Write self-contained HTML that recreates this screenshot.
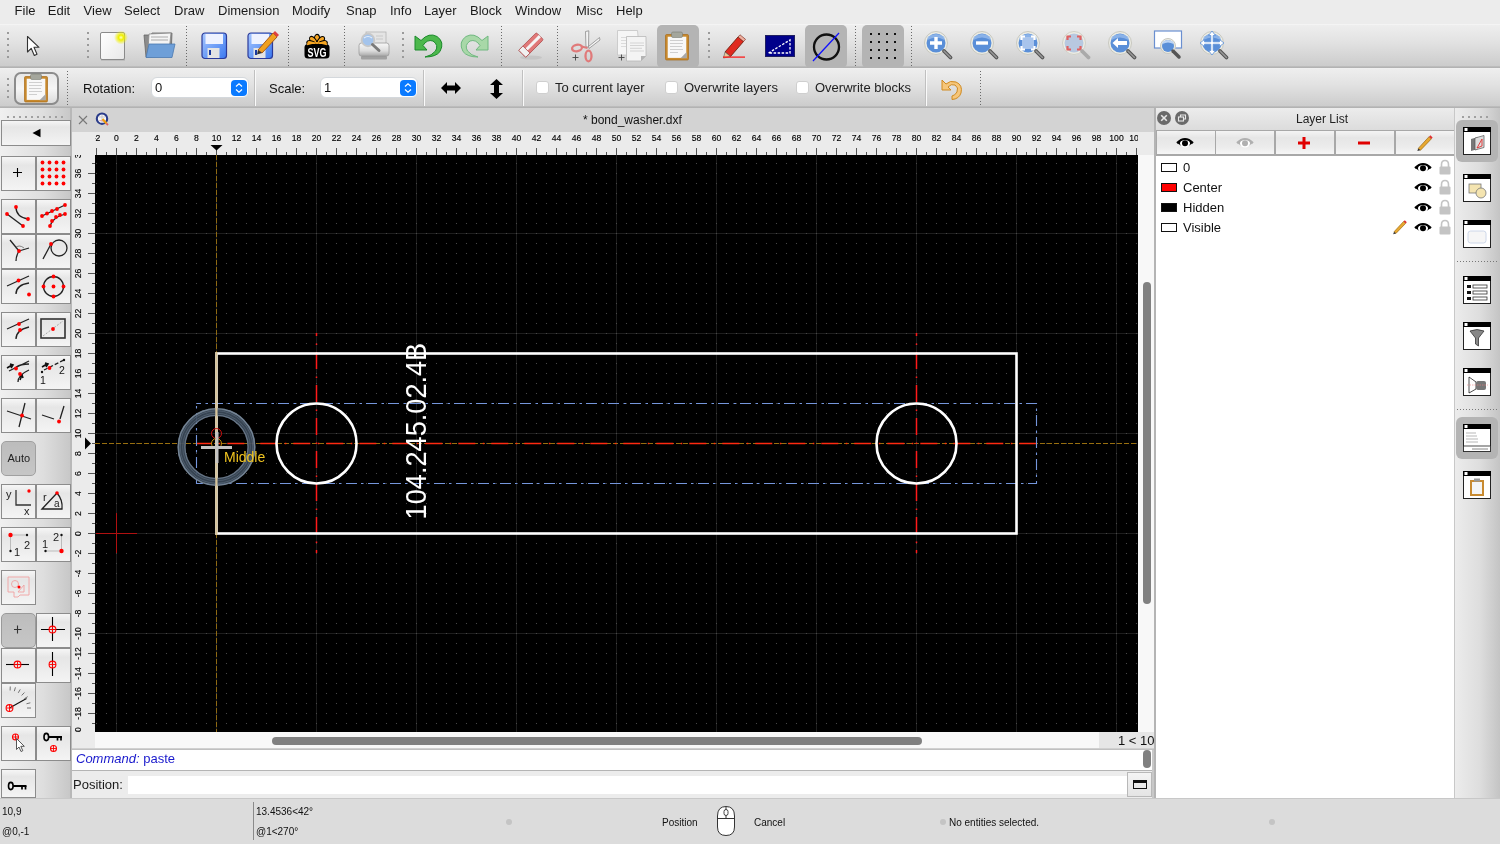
<!DOCTYPE html>
<html><head><meta charset="utf-8"><style>
html,body{margin:0;padding:0;width:1500px;height:844px;overflow:hidden;background:#ececec;font-family:"Liberation Sans", sans-serif;position:relative}
</style></head><body>
<div style="position:absolute;left:0;top:0;width:1500px;height:844px;will-change:transform"><div style="position:absolute;left:0px;top:0px;width:1500px;height:24px;background:#ececec"></div><div style="position:absolute;left:14.6px;top:4px;font-size:13px;line-height:1;color:#1a1a1a;white-space:nowrap;">File</div><div style="position:absolute;left:47.8px;top:4px;font-size:13px;line-height:1;color:#1a1a1a;white-space:nowrap;">Edit</div><div style="position:absolute;left:83.6px;top:4px;font-size:13px;line-height:1;color:#1a1a1a;white-space:nowrap;">View</div><div style="position:absolute;left:124px;top:4px;font-size:13px;line-height:1;color:#1a1a1a;white-space:nowrap;">Select</div><div style="position:absolute;left:174px;top:4px;font-size:13px;line-height:1;color:#1a1a1a;white-space:nowrap;">Draw</div><div style="position:absolute;left:218px;top:4px;font-size:13px;line-height:1;color:#1a1a1a;white-space:nowrap;">Dimension</div><div style="position:absolute;left:292px;top:4px;font-size:13px;line-height:1;color:#1a1a1a;white-space:nowrap;">Modify</div><div style="position:absolute;left:346px;top:4px;font-size:13px;line-height:1;color:#1a1a1a;white-space:nowrap;">Snap</div><div style="position:absolute;left:390px;top:4px;font-size:13px;line-height:1;color:#1a1a1a;white-space:nowrap;">Info</div><div style="position:absolute;left:424px;top:4px;font-size:13px;line-height:1;color:#1a1a1a;white-space:nowrap;">Layer</div><div style="position:absolute;left:470px;top:4px;font-size:13px;line-height:1;color:#1a1a1a;white-space:nowrap;">Block</div><div style="position:absolute;left:515px;top:4px;font-size:13px;line-height:1;color:#1a1a1a;white-space:nowrap;">Window</div><div style="position:absolute;left:576px;top:4px;font-size:13px;line-height:1;color:#1a1a1a;white-space:nowrap;">Misc</div><div style="position:absolute;left:616px;top:4px;font-size:13px;line-height:1;color:#1a1a1a;white-space:nowrap;">Help</div><div style="position:absolute;left:0px;top:24px;width:1500px;height:44px;background:linear-gradient(#eeeeee,#e2e2e2 40%,#cacaca);border-top:1px solid #f4f4f4;box-sizing:border-box"></div><div style="position:absolute;left:0px;top:68px;width:1500px;height:40px;background:linear-gradient(#eeeeee,#e2e2e2 40%,#cacaca);border-top:1px solid #f0f0f0;box-sizing:border-box"></div><div style="position:absolute;left:0px;top:66px;width:1500px;height:2px;background:linear-gradient(#c0c0c0,#aeaeae)"></div><div style="position:absolute;left:0px;top:106px;width:1500px;height:2px;background:linear-gradient(#c0c0c0,#aeaeae)"></div><div style="position:absolute;left:7px;top:32px;width:2px;height:2px;background:#9a9a9a"></div><div style="position:absolute;left:7px;top:38px;width:2px;height:2px;background:#9a9a9a"></div><div style="position:absolute;left:7px;top:44px;width:2px;height:2px;background:#9a9a9a"></div><div style="position:absolute;left:7px;top:50px;width:2px;height:2px;background:#9a9a9a"></div><div style="position:absolute;left:7px;top:56px;width:2px;height:2px;background:#9a9a9a"></div><div style="position:absolute;left:87px;top:32px;width:2px;height:2px;background:#9a9a9a"></div><div style="position:absolute;left:87px;top:38px;width:2px;height:2px;background:#9a9a9a"></div><div style="position:absolute;left:87px;top:44px;width:2px;height:2px;background:#9a9a9a"></div><div style="position:absolute;left:87px;top:50px;width:2px;height:2px;background:#9a9a9a"></div><div style="position:absolute;left:87px;top:56px;width:2px;height:2px;background:#9a9a9a"></div><div style="position:absolute;left:402px;top:32px;width:2px;height:2px;background:#9a9a9a"></div><div style="position:absolute;left:402px;top:38px;width:2px;height:2px;background:#9a9a9a"></div><div style="position:absolute;left:402px;top:44px;width:2px;height:2px;background:#9a9a9a"></div><div style="position:absolute;left:402px;top:50px;width:2px;height:2px;background:#9a9a9a"></div><div style="position:absolute;left:402px;top:56px;width:2px;height:2px;background:#9a9a9a"></div><div style="position:absolute;left:708px;top:32px;width:2px;height:2px;background:#9a9a9a"></div><div style="position:absolute;left:708px;top:38px;width:2px;height:2px;background:#9a9a9a"></div><div style="position:absolute;left:708px;top:44px;width:2px;height:2px;background:#9a9a9a"></div><div style="position:absolute;left:708px;top:50px;width:2px;height:2px;background:#9a9a9a"></div><div style="position:absolute;left:708px;top:56px;width:2px;height:2px;background:#9a9a9a"></div><div style="position:absolute;left:186px;top:26px;width:1px;height:41px;background:repeating-linear-gradient(#6a6a6a 0 1px,transparent 1px 3px)"></div><div style="position:absolute;left:288px;top:26px;width:1px;height:41px;background:repeating-linear-gradient(#6a6a6a 0 1px,transparent 1px 3px)"></div><div style="position:absolute;left:344px;top:26px;width:1px;height:41px;background:repeating-linear-gradient(#6a6a6a 0 1px,transparent 1px 3px)"></div><div style="position:absolute;left:501px;top:26px;width:1px;height:41px;background:repeating-linear-gradient(#6a6a6a 0 1px,transparent 1px 3px)"></div><div style="position:absolute;left:557px;top:26px;width:1px;height:41px;background:repeating-linear-gradient(#6a6a6a 0 1px,transparent 1px 3px)"></div><div style="position:absolute;left:855px;top:26px;width:1px;height:41px;background:repeating-linear-gradient(#6a6a6a 0 1px,transparent 1px 3px)"></div><div style="position:absolute;left:911px;top:26px;width:1px;height:41px;background:repeating-linear-gradient(#6a6a6a 0 1px,transparent 1px 3px)"></div><div style="position:absolute;left:657px;top:25px;width:42px;height:43px;background:#b4b4b4;border-radius:5px"></div><div style="position:absolute;left:805px;top:25px;width:42px;height:43px;background:#b4b4b4;border-radius:5px"></div><div style="position:absolute;left:862px;top:25px;width:42px;height:43px;background:#b4b4b4;border-radius:5px"></div><svg width="16" height="24" viewBox="0 0 16 24" style="position:absolute;left:26px;top:35px;overflow:visible"><path d="M1.5 1.5 L1.5 17 L5.2 13.3 L8.3 20.5 L11 19.3 L8 12.3 L13 12.3 Z" fill="#fff" stroke="#333" stroke-width="1.1" stroke-linejoin="round"/></svg><svg width="30" height="32" viewBox="0 0 30 32" style="position:absolute;left:99px;top:31px;overflow:visible"><defs><radialGradient id="glow"><stop offset="0" stop-color="#ffffc0"/><stop offset="0.35" stop-color="#f0f000"/><stop offset="1" stop-color="#f0f000" stop-opacity="0"/></radialGradient><linearGradient id="pg" x1="0" y1="0" x2="1" y2="1"><stop offset="0" stop-color="#ffffff"/><stop offset="1" stop-color="#e8e8e8"/></linearGradient></defs><rect x="1.5" y="1.5" width="24" height="27" rx="1.5" fill="url(#pg)" stroke="#8a8a8a" stroke-width="1"/><rect x="2" y="28" width="24" height="1.5" fill="#8a8a8a" opacity="0.5"/><circle cx="22" cy="6.5" r="7" fill="url(#glow)"/></svg><svg width="36" height="30" viewBox="0 0 36 30" style="position:absolute;left:142px;top:31px;overflow:visible"><path d="M2 4 L9 4 L10 2 L30 2 L29 25 L4 26 Z" fill="#8c8c8c" stroke="#666" stroke-width="0.8"/><path d="M7 3 L29 2 L27 20 L6 20 Z" fill="#f4f4f4" stroke="#888" stroke-width="0.8"/><path d="M9 6 L26 6 M9 9 L26 9" stroke="#aaa" stroke-width="1.2"/><path d="M7 13 L33 13 L30 26.5 L4 26.5 Z" fill="#6e9fd8" stroke="#4a78b0" stroke-width="0.8"/></svg><svg width="27" height="28" viewBox="0 0 27 28" style="position:absolute;left:201px;top:32px;overflow:visible"><defs><linearGradient id="fb" x1="0" y1="0" x2="1" y2="1"><stop offset="0" stop-color="#a8c8ff"/><stop offset="1" stop-color="#3a78f0"/></linearGradient></defs><rect x="1" y="1" width="24.5" height="25.5" rx="3" fill="url(#fb)" stroke="#2a3a9a" stroke-width="1.2"/><rect x="4.5" y="2" width="17.5" height="10" fill="#eef2ff"/><rect x="6.5" y="16" width="12" height="10" fill="#e4e4e4"/><rect x="8" y="18" width="2" height="5" fill="#1a3aa0"/></svg><svg width="27" height="28" viewBox="0 0 27 28" style="position:absolute;left:247px;top:32px;overflow:visible"><defs><linearGradient id="fb" x1="0" y1="0" x2="1" y2="1"><stop offset="0" stop-color="#a8c8ff"/><stop offset="1" stop-color="#3a78f0"/></linearGradient></defs><rect x="1" y="1" width="24.5" height="25.5" rx="3" fill="url(#fb)" stroke="#2a3a9a" stroke-width="1.2"/><rect x="4.5" y="2" width="17.5" height="10" fill="#eef2ff"/><rect x="6.5" y="16" width="12" height="10" fill="#e4e4e4"/><rect x="8" y="18" width="2" height="5" fill="#1a3aa0"/></svg><svg width="22" height="24" viewBox="0 0 22 24" style="position:absolute;left:256px;top:30px;overflow:visible"><path d="M2 20 L17 3 L21 7 L6 23 Z" fill="#f0a020" stroke="#a05010" stroke-width="0.9"/><path d="M17 3 L19 1 L23 5 L21 7 Z" fill="#e04040"/><path d="M2 20 L6 23 L1 24.5 Z" fill="#333"/></svg><svg width="26" height="26" viewBox="0 0 26 26" style="position:absolute;left:304px;top:33px;overflow:visible"><ellipse cx="13" cy="6" rx="2.6" ry="4.6" transform="rotate(0 13 12)" fill="#f6a623" stroke="#000" stroke-width="1.1"/><ellipse cx="13" cy="6" rx="2.6" ry="4.6" transform="rotate(40 13 12)" fill="#f6a623" stroke="#000" stroke-width="1.1"/><ellipse cx="13" cy="6" rx="2.6" ry="4.6" transform="rotate(-40 13 12)" fill="#f6a623" stroke="#000" stroke-width="1.1"/><ellipse cx="13" cy="6" rx="2.6" ry="4.6" transform="rotate(75 13 12)" fill="#f6a623" stroke="#000" stroke-width="1.1"/><ellipse cx="13" cy="6" rx="2.6" ry="4.6" transform="rotate(-75 13 12)" fill="#f6a623" stroke="#000" stroke-width="1.1"/><circle cx="13" cy="12" r="2" fill="#f6a623"/><rect x="0.5" y="11" width="25" height="14.5" rx="3.5" fill="#000"/><path d="M3 11.5 Q13 8 23 11.5" stroke="#f6a623" stroke-width="1.5" fill="none"/><text x="13" y="23.5" text-anchor="middle" font-family="Liberation Sans" font-weight="bold" font-size="12.5" fill="#fff" textLength="19" lengthAdjust="spacingAndGlyphs">SVG</text></svg><svg width="32" height="30" viewBox="0 0 32 30" style="position:absolute;left:358px;top:31px;overflow:visible"><defs><linearGradient id="pr" x1="0" y1="0" x2="0" y2="1"><stop offset="0" stop-color="#f8f8f8"/><stop offset="0.6" stop-color="#dcdcdc"/><stop offset="1" stop-color="#a8a8a8"/></linearGradient></defs><rect x="8" y="1" width="20" height="14" fill="#e4e4e4" stroke="#b4b4b4" stroke-width="0.8"/><path d="M18 5 H25 M18 8 H25" stroke="#c8c8c8"/><rect x="1" y="12" width="30" height="13" rx="2.5" fill="url(#pr)" stroke="#9c9c9c" stroke-width="0.8"/><rect x="3" y="25" width="26" height="3.5" rx="1" fill="#8c8c8c" opacity="0.7"/><circle cx="10" cy="9" r="6.3" fill="#a4c4ec" stroke="#c8c8c8" stroke-width="1.8"/><path d="M6 7 Q10 4 14 7" stroke="#e4eefa" stroke-width="1.2" fill="none"/><path d="M14.5 13.5 L21 19.5" stroke="#7a7a7a" stroke-width="3" stroke-linecap="round"/></svg><svg width="32" height="32" viewBox="0 0 32 32" style="position:absolute;left:412px;top:27px;overflow:visible"><path d="M3 9 L3 23 L15 23 L11 18.5 Q15 12 21 14 Q27 18 23.5 24 Q20 28.5 13 30 Q24 30 28 24.5 Q33 15 25 9.5 Q17 5 9 13.5 Z" fill="#4cb84c" stroke="#1a8a2a" stroke-width="1"/></svg><svg width="32" height="32" viewBox="0 0 32 32" style="position:absolute;left:459px;top:27px;overflow:visible"><g transform="translate(32,0) scale(-1,1)"><path d="M3 9 L3 23 L15 23 L11 18.5 Q15 12 21 14 Q27 18 23.5 24 Q20 28.5 13 30 Q24 30 28 24.5 Q33 15 25 9.5 Q17 5 9 13.5 Z" fill="#a8d8a8" stroke="#70b880" stroke-width="1"/></g></svg><svg width="28" height="30" viewBox="0 0 28 30" style="position:absolute;left:516px;top:32px;overflow:visible"><ellipse cx="15" cy="25.5" rx="11" ry="2" fill="#bbb" opacity="0.6"/><g transform="rotate(-45 14 14)"><rect x="3" y="9" width="25" height="10" rx="1.5" fill="#e07878" stroke="#b05050" stroke-width="0.8"/><rect x="3" y="12.5" width="25" height="3" fill="#f4f4f4"/><rect x="3" y="9" width="6" height="10" fill="#f0f0f0" stroke="#b05050" stroke-width="0.8"/></g></svg><svg width="45" height="45" viewBox="0 0 45 45" style="position:absolute;left:560px;top:25px;overflow:visible"><path d="M25.5 6.5 L28.8 5.8 L28.5 22 L26 22 Z" fill="#f4f4f4" stroke="#8c8c8c" stroke-width="0.8"/><path d="M28.5 21.5 L39.5 12.5 L40 15 L29 23.5 Z" fill="#f4f4f4" stroke="#8c8c8c" stroke-width="0.8"/><ellipse cx="17" cy="23" rx="5" ry="3.2" transform="rotate(-12 17 23)" fill="none" stroke="#e07a7a" stroke-width="2.3"/><path d="M21.5 21.5 L27.5 23" stroke="#e07a7a" stroke-width="2"/><ellipse cx="28.5" cy="31" rx="3" ry="5.3" fill="none" stroke="#e07a7a" stroke-width="2.3"/><path d="M12.5 32.5 H18.5 M15.5 29.5 V35.5" stroke="#444" stroke-width="0.9"/></svg><svg width="45" height="45" viewBox="0 0 45 45" style="position:absolute;left:560px;top:25px;overflow:visible"><path d="M57.5 5.5 H77.5 L78 11 V30 H57.5 Z" fill="#f6f6f6" stroke="#c4c4c4" stroke-width="0.8" transform="translate(0,0)"/><path d="M61 12.5 H66 M61 15.5 H66 M61 18.5 H66 M61 21.5 H66" stroke="#d8d8d8" stroke-width="0.9"/><path d="M66.5 11.5 H86 V31 L81 36 H66.5 Z" fill="#f4f4f4" stroke="#b8b8b8" stroke-width="0.8"/><path d="M81 36 L81 31 L86 31 Z" fill="#b4b4b4"/><path d="M70 18 H84 M70 20.5 H84 M70 23.3 H82 M70 26 H84" stroke="#d0d0d0" stroke-width="0.9"/><path d="M58.5 32.5 H64.5 M61.5 29.5 V35.5" stroke="#444" stroke-width="0.9"/></svg><svg width="28" height="32" viewBox="0 0 28 32" style="position:absolute;left:664px;top:31px;overflow:visible"><rect x="1.5" y="3.5" width="23" height="25.5" rx="1.2" fill="#c8892c" stroke="#a86a18" stroke-width="0.7"/><rect x="3.7" y="5.7" width="18.6" height="21.2" fill="#f8f8f8"/><path d="M6 9.5 H19 M6 12.5 H19 M6 15.5 H18 M6 18.5 H19 M6 21.5 H14" stroke="#c4c4c4" stroke-width="0.8"/><path d="M16.5 27.2 L22.7 21 L22.7 27.2 Z" fill="#a8a8a8"/><rect x="7.5" y="1" width="11" height="5.5" rx="1.5" fill="#a4a69c" stroke="#7a7c72" stroke-width="0.6"/></svg><svg width="26" height="30" viewBox="0 0 26 30" style="position:absolute;left:721px;top:31px;overflow:visible"><path d="M4 21 L17 6 L22.5 10.5 L9.5 25.5 Z" fill="#e02a20" stroke="#702010" stroke-width="0.9"/><path d="M17 6 L19 3.8 L24.5 8.3 L22.5 10.5 Z" fill="#f0b0a0" stroke="#702010" stroke-width="0.6"/><path d="M4 21 L9.5 25.5 L2.5 27 Z" fill="#e8c898" stroke="#555" stroke-width="0.6"/><rect x="2" y="25.5" width="22" height="1.2" fill="#ff1010"/></svg><svg width="30" height="22" viewBox="0 0 30 22" style="position:absolute;left:765px;top:35px;overflow:visible"><rect x="0.5" y="0.5" width="29" height="21" fill="#00008a" stroke="#202060" stroke-width="1"/><path d="M3.5 18 L25 5 L25 18 Z" fill="none" stroke="#fff" stroke-width="1.3" stroke-dasharray="2.5 1.5"/></svg><svg width="32" height="32" viewBox="0 0 32 32" style="position:absolute;left:811px;top:31px;overflow:visible"><circle cx="15.5" cy="16" r="12.5" fill="none" stroke="#111" stroke-width="2.3"/><path d="M2 30 L28 2" stroke="#1010ff" stroke-width="1.3"/></svg><svg width="30" height="30" viewBox="0 0 30 30" style="position:absolute;left:869px;top:32px;overflow:visible"><rect x="1" y="1" width="2" height="2" fill="#111"/><rect x="1" y="9" width="2" height="2" fill="#111"/><rect x="1" y="17" width="2" height="2" fill="#111"/><rect x="1" y="25" width="2" height="2" fill="#111"/><rect x="9" y="1" width="2" height="2" fill="#111"/><rect x="9" y="9" width="2" height="2" fill="#111"/><rect x="9" y="17" width="2" height="2" fill="#111"/><rect x="9" y="25" width="2" height="2" fill="#111"/><rect x="17" y="1" width="2" height="2" fill="#111"/><rect x="17" y="9" width="2" height="2" fill="#111"/><rect x="17" y="17" width="2" height="2" fill="#111"/><rect x="17" y="25" width="2" height="2" fill="#111"/><rect x="25" y="1" width="2" height="2" fill="#111"/><rect x="25" y="9" width="2" height="2" fill="#111"/><rect x="25" y="17" width="2" height="2" fill="#111"/><rect x="25" y="25" width="2" height="2" fill="#111"/></svg><svg width="34" height="34" viewBox="0 0 34 34" style="position:absolute;left:922px;top:29px;overflow:visible"><g opacity="1"><defs></defs><circle cx="14" cy="14" r="11.5" fill="#ecece4" stroke="#c8c8c0" stroke-width="1"/><circle cx="14" cy="14" r="9.5" fill="#5a8fd8"/><path d="M5.5 11 Q14 6 22.5 11 L22.5 8 Q14 2 5.5 8 Z" fill="#9ec0f0" opacity="0.7"/><path d="M14 8 V20 M8 14 H20" stroke="#fff" stroke-width="3.4"/><path d="M22 22 L28.5 28.5" stroke="#555" stroke-width="3.8" stroke-linecap="round"/><path d="M22 22 L28.5 28.5" stroke="#999" stroke-width="1.5" stroke-linecap="round"/></g></svg><svg width="34" height="34" viewBox="0 0 34 34" style="position:absolute;left:968px;top:29px;overflow:visible"><g opacity="1"><defs></defs><circle cx="14" cy="14" r="11.5" fill="#ecece4" stroke="#c8c8c0" stroke-width="1"/><circle cx="14" cy="14" r="9.5" fill="#5a8fd8"/><path d="M5.5 11 Q14 6 22.5 11 L22.5 8 Q14 2 5.5 8 Z" fill="#9ec0f0" opacity="0.7"/><path d="M8 14 H20" stroke="#fff" stroke-width="3.4"/><path d="M22 22 L28.5 28.5" stroke="#555" stroke-width="3.8" stroke-linecap="round"/><path d="M22 22 L28.5 28.5" stroke="#999" stroke-width="1.5" stroke-linecap="round"/></g></svg><svg width="34" height="34" viewBox="0 0 34 34" style="position:absolute;left:1014px;top:29px;overflow:visible"><g opacity="1"><defs></defs><circle cx="14" cy="14" r="11.5" fill="#ecece4" stroke="#c8c8c0" stroke-width="1"/><circle cx="14" cy="14" r="9.5" fill="#5a8fd8"/><path d="M5.5 11 Q14 6 22.5 11 L22.5 8 Q14 2 5.5 8 Z" fill="#9ec0f0" opacity="0.7"/><rect x="8" y="8" width="12" height="12" fill="#a8c4ec"/><path d="M7.5 11 V7.5 H11 M17 7.5 H20.5 V11 M20.5 17 V20.5 H17 M11 20.5 H7.5 V17" fill="none" stroke="#fff" stroke-width="2.2"/><path d="M22 22 L28.5 28.5" stroke="#555" stroke-width="3.8" stroke-linecap="round"/><path d="M22 22 L28.5 28.5" stroke="#999" stroke-width="1.5" stroke-linecap="round"/></g></svg><svg width="34" height="34" viewBox="0 0 34 34" style="position:absolute;left:1060px;top:29px;overflow:visible"><circle cx="14" cy="14" r="11.5" fill="#ecece4" stroke="#d0d0c8" stroke-width="1"/><circle cx="14" cy="14" r="9.5" fill="#b8c8e0"/><path d="M7.5 11 V7.5 H11 M17 7.5 H20.5 V11 M20.5 17 V20.5 H17 M11 20.5 H7.5 V17" fill="none" stroke="#e06060" stroke-width="2.2"/><path d="M22 22 L28.5 28.5" stroke="#aaa" stroke-width="3.8" stroke-linecap="round"/></svg><svg width="34" height="34" viewBox="0 0 34 34" style="position:absolute;left:1106px;top:29px;overflow:visible"><g opacity="1"><defs></defs><circle cx="14" cy="14" r="11.5" fill="#ecece4" stroke="#c8c8c0" stroke-width="1"/><circle cx="14" cy="14" r="9.5" fill="#5a8fd8"/><path d="M5.5 11 Q14 6 22.5 11 L22.5 8 Q14 2 5.5 8 Z" fill="#9ec0f0" opacity="0.7"/><path d="M6.5 14 L12 9 L12 12 L21 12 L21 16 L12 16 L12 19 Z" fill="#fff"/><path d="M22 22 L28.5 28.5" stroke="#555" stroke-width="3.8" stroke-linecap="round"/><path d="M22 22 L28.5 28.5" stroke="#999" stroke-width="1.5" stroke-linecap="round"/></g></svg><svg width="34" height="34" viewBox="0 0 34 34" style="position:absolute;left:1153px;top:29px;overflow:visible"><rect x="1.5" y="2" width="27" height="17" fill="#fff" stroke="#6a8fd0" stroke-width="1.2"/><circle cx="15" cy="17" r="7.5" fill="#ecece4" stroke="#c8c8c0" stroke-width="1"/><circle cx="15" cy="17" r="6" fill="#5a8fd8"/><path d="M9.5 15 Q15 12 20.5 15 L20.5 13 Q15 9 9.5 13 Z" fill="#bcd4f4"/><path d="M20 22 L26 28" stroke="#555" stroke-width="3.5" stroke-linecap="round"/></svg><svg width="34" height="34" viewBox="0 0 34 34" style="position:absolute;left:1198px;top:29px;overflow:visible"><g opacity="1"><defs></defs><circle cx="14" cy="14" r="11.5" fill="#ecece4" stroke="#c8c8c0" stroke-width="1"/><circle cx="14" cy="14" r="9.5" fill="#5a8fd8"/><path d="M5.5 11 Q14 6 22.5 11 L22.5 8 Q14 2 5.5 8 Z" fill="#9ec0f0" opacity="0.7"/><path d="M14 2 L17.5 6.5 H15.2 V12.8 H21.5 V10.5 L26 14 L21.5 17.5 V15.2 H15.2 V21.5 H17.5 L14 26 L10.5 21.5 H12.8 V15.2 H6.5 V17.5 L2 14 L6.5 10.5 V12.8 H12.8 V6.5 H10.5 Z" fill="#fff" stroke="#5a8fd8" stroke-width="0.8"/><path d="M22 22 L28.5 28.5" stroke="#555" stroke-width="3.8" stroke-linecap="round"/><path d="M22 22 L28.5 28.5" stroke="#999" stroke-width="1.5" stroke-linecap="round"/></g></svg><div style="position:absolute;left:7px;top:78px;width:2px;height:2px;background:#9a9a9a"></div><div style="position:absolute;left:7px;top:84px;width:2px;height:2px;background:#9a9a9a"></div><div style="position:absolute;left:7px;top:90px;width:2px;height:2px;background:#9a9a9a"></div><div style="position:absolute;left:7px;top:96px;width:2px;height:2px;background:#9a9a9a"></div><div style="position:absolute;left:67px;top:71px;width:1px;height:34px;background:repeating-linear-gradient(#6a6a6a 0 1px,transparent 1px 3px)"></div><div style="position:absolute;left:980px;top:71px;width:1px;height:34px;background:repeating-linear-gradient(#6a6a6a 0 1px,transparent 1px 3px)"></div><div style="position:absolute;left:14px;top:72px;width:45px;height:33px;border:2px solid #8c8c8c;border-radius:7px;box-sizing:border-box;background:linear-gradient(#e8e8e8,#f6f6f6 50%,#dcdcdc)"></div><svg width="28" height="32" viewBox="0 0 28 32" style="position:absolute;left:23px;top:73px;overflow:visible"><rect x="1.5" y="3.5" width="23" height="25.5" rx="1.2" fill="#c8892c" stroke="#a86a18" stroke-width="0.7"/><rect x="3.7" y="5.7" width="18.6" height="21.2" fill="#f8f8f8"/><path d="M6 9.5 H19 M6 12.5 H19 M6 15.5 H18 M6 18.5 H19 M6 21.5 H14" stroke="#c4c4c4" stroke-width="0.8"/><path d="M16.5 27.2 L22.7 21 L22.7 27.2 Z" fill="#a8a8a8"/><rect x="7.5" y="1" width="11" height="5.5" rx="1.5" fill="#a4a69c" stroke="#7a7c72" stroke-width="0.6"/></svg><div style="position:absolute;left:83px;top:82px;font-size:13px;line-height:13px;color:#111">Rotation:</div><div style="position:absolute;left:151px;top:77px;width:98px;height:21px;background:#fff;border:1px solid #d4d8dc;border-radius:6px;box-sizing:border-box"></div><div style="position:absolute;left:155px;top:81px;font-size:13px;line-height:13px;color:#111">0</div><div style="position:absolute;left:231px;top:80px;width:16px;height:16px;background:#0a7aff;border-radius:4px"></div><svg width="16" height="16" viewBox="0 0 16 16" style="position:absolute;left:231px;top:80px;overflow:visible"><path d="M5 6.5 L8 3.8 L11 6.5 M5 9.5 L8 12.2 L11 9.5" fill="none" stroke="#fff" stroke-width="1.2"/></svg><div style="position:absolute;left:254px;top:70px;width:1px;height:36px;background:#c0c0c0"></div><div style="position:absolute;left:255px;top:70px;width:1px;height:36px;background:#fafafa"></div><div style="position:absolute;left:269px;top:82px;font-size:13px;line-height:13px;color:#111">Scale:</div><div style="position:absolute;left:320px;top:77px;width:98px;height:21px;background:#fff;border:1px solid #d4d8dc;border-radius:6px;box-sizing:border-box"></div><div style="position:absolute;left:324px;top:81px;font-size:13px;line-height:13px;color:#111">1</div><div style="position:absolute;left:400px;top:80px;width:16px;height:16px;background:#0a7aff;border-radius:4px"></div><svg width="16" height="16" viewBox="0 0 16 16" style="position:absolute;left:400px;top:80px;overflow:visible"><path d="M5 6.5 L8 3.8 L11 6.5 M5 9.5 L8 12.2 L11 9.5" fill="none" stroke="#fff" stroke-width="1.2"/></svg><div style="position:absolute;left:423px;top:70px;width:1px;height:36px;background:#c0c0c0"></div><div style="position:absolute;left:424px;top:70px;width:1px;height:36px;background:#fafafa"></div><svg width="22" height="16" viewBox="0 0 22 16" style="position:absolute;left:440px;top:80px;overflow:visible"><path d="M1 8 L7 2 L7 5.5 L15 5.5 L15 2 L21 8 L15 14 L15 10.5 L7 10.5 L7 14 Z" fill="#000"/></svg><svg width="15" height="22" viewBox="0 0 15 22" style="position:absolute;left:489px;top:78px;overflow:visible"><path d="M7.5 1 L14 7 L10 7 L10 15 L14 15 L7.5 21 L1 15 L5 15 L5 7 L1 7 Z" fill="#000"/></svg><div style="position:absolute;left:522px;top:70px;width:1px;height:36px;background:#c0c0c0"></div><div style="position:absolute;left:523px;top:70px;width:1px;height:36px;background:#fafafa"></div><div style="position:absolute;left:536px;top:81px;width:13px;height:13px;background:#fff;border:1px solid #cfcfcf;border-radius:3px;box-sizing:border-box"></div><div style="position:absolute;left:555px;top:81px;font-size:13px;line-height:13px;color:#222;white-space:nowrap">To current layer</div><div style="position:absolute;left:665px;top:81px;width:13px;height:13px;background:#fff;border:1px solid #cfcfcf;border-radius:3px;box-sizing:border-box"></div><div style="position:absolute;left:684px;top:81px;font-size:13px;line-height:13px;color:#222;white-space:nowrap">Overwrite layers</div><div style="position:absolute;left:796px;top:81px;width:13px;height:13px;background:#fff;border:1px solid #cfcfcf;border-radius:3px;box-sizing:border-box"></div><div style="position:absolute;left:815px;top:81px;font-size:13px;line-height:13px;color:#222;white-space:nowrap">Overwrite blocks</div><div style="position:absolute;left:925px;top:70px;width:1px;height:36px;background:#c0c0c0"></div><div style="position:absolute;left:926px;top:70px;width:1px;height:36px;background:#fafafa"></div><svg width="26" height="24" viewBox="0 0 26 24" style="position:absolute;left:940px;top:77px;overflow:visible"><path d="M2 3 L2 13 L11 13 L8 10 Q11 6.5 15 8 Q19 10.5 17 15 Q15 18.5 12 19 L12 22.5 Q19 22 21 16 Q23 8 16 5 Q10 3 6 7 Z" fill="#f6c67a" stroke="#d08a20" stroke-width="1"/></svg><div style="position:absolute;left:0px;top:108px;width:72px;height:690px;background:linear-gradient(90deg,#f0f0f0,#dedede 60%,#c6c6c6)"></div><div style="position:absolute;left:70px;top:108px;width:2px;height:690px;background:#b8b8b8"></div><div style="position:absolute;left:7px;top:116px;width:2px;height:2px;background:#a0a0a0"></div><div style="position:absolute;left:13px;top:116px;width:2px;height:2px;background:#a0a0a0"></div><div style="position:absolute;left:19px;top:116px;width:2px;height:2px;background:#a0a0a0"></div><div style="position:absolute;left:25px;top:116px;width:2px;height:2px;background:#a0a0a0"></div><div style="position:absolute;left:31px;top:116px;width:2px;height:2px;background:#a0a0a0"></div><div style="position:absolute;left:37px;top:116px;width:2px;height:2px;background:#a0a0a0"></div><div style="position:absolute;left:43px;top:116px;width:2px;height:2px;background:#a0a0a0"></div><div style="position:absolute;left:49px;top:116px;width:2px;height:2px;background:#a0a0a0"></div><div style="position:absolute;left:55px;top:116px;width:2px;height:2px;background:#a0a0a0"></div><div style="position:absolute;left:61px;top:116px;width:2px;height:2px;background:#a0a0a0"></div><div style="position:absolute;left:1px;top:120px;width:70px;height:26px;box-sizing:border-box;border:1px solid #8c8c8c;background:linear-gradient(#f6f6f6,#e6e6e6 25%,#ececec 60%,#f4f4f4)"></div><svg width="70" height="26" viewBox="0 0 70 26" style="position:absolute;left:1px;top:120px;overflow:visible"><path d="M31.5 13 L39.5 8.7 L39.5 17.3 Z" fill="#000"/></svg><div style="position:absolute;left:1px;top:156px;width:35px;height:35px;box-sizing:border-box;border:1px solid #8c8c8c;background:linear-gradient(#f6f6f6,#e6e6e6 25%,#ececec 60%,#f4f4f4)"></div><svg width="35" height="35" viewBox="0 0 35 35" style="position:absolute;left:1px;top:156px;overflow:visible"><path d="M12 16.5 H21 M16.5 12 V21" stroke="#000" stroke-width="1.1"/></svg><div style="position:absolute;left:36px;top:156px;width:35px;height:35px;box-sizing:border-box;border:1px solid #8c8c8c;background:linear-gradient(#f6f6f6,#e6e6e6 25%,#ececec 60%,#f4f4f4)"></div><svg width="35" height="35" viewBox="0 0 35 35" style="position:absolute;left:36px;top:156px;overflow:visible"><circle cx="6.5" cy="6.5" r="1.9" fill="#ff0000"/><circle cx="6.5" cy="13.5" r="1.9" fill="#ff0000"/><circle cx="6.5" cy="20.5" r="1.9" fill="#ff0000"/><circle cx="6.5" cy="27.5" r="1.9" fill="#ff0000"/><circle cx="13.5" cy="6.5" r="1.9" fill="#ff0000"/><circle cx="13.5" cy="13.5" r="1.9" fill="#ff0000"/><circle cx="13.5" cy="20.5" r="1.9" fill="#ff0000"/><circle cx="13.5" cy="27.5" r="1.9" fill="#ff0000"/><circle cx="20.5" cy="6.5" r="1.9" fill="#ff0000"/><circle cx="20.5" cy="13.5" r="1.9" fill="#ff0000"/><circle cx="20.5" cy="20.5" r="1.9" fill="#ff0000"/><circle cx="20.5" cy="27.5" r="1.9" fill="#ff0000"/><circle cx="27.5" cy="6.5" r="1.9" fill="#ff0000"/><circle cx="27.5" cy="13.5" r="1.9" fill="#ff0000"/><circle cx="27.5" cy="20.5" r="1.9" fill="#ff0000"/><circle cx="27.5" cy="27.5" r="1.9" fill="#ff0000"/></svg><div style="position:absolute;left:1px;top:199px;width:35px;height:35px;box-sizing:border-box;border:1px solid #8c8c8c;background:linear-gradient(#f6f6f6,#e6e6e6 25%,#ececec 60%,#f4f4f4)"></div><svg width="35" height="35" viewBox="0 0 35 35" style="position:absolute;left:1px;top:199px;overflow:visible"><path d="M6 15 L22 27" stroke="#222" stroke-width="1.3" fill="none"/><path d="M15 8 Q15 18 27 20" stroke="#222" stroke-width="1.3" fill="none"/><circle cx="6" cy="15" r="1.9" fill="#ff0000"/><circle cx="22" cy="27" r="1.9" fill="#ff0000"/><circle cx="15" cy="8" r="1.9" fill="#ff0000"/><circle cx="27" cy="20" r="1.9" fill="#ff0000"/></svg><div style="position:absolute;left:36px;top:199px;width:35px;height:35px;box-sizing:border-box;border:1px solid #8c8c8c;background:linear-gradient(#f6f6f6,#e6e6e6 25%,#ececec 60%,#f4f4f4)"></div><svg width="35" height="35" viewBox="0 0 35 35" style="position:absolute;left:36px;top:199px;overflow:visible"><path d="M6 17 L29 6" stroke="#222" stroke-width="1.3" fill="none"/><path d="M14 27 Q16 19 29 15" stroke="#222" stroke-width="1.3" fill="none"/><circle cx="6" cy="17" r="1.9" fill="#ff0000"/><circle cx="11" cy="14.5" r="1.9" fill="#ff0000"/><circle cx="16" cy="12" r="1.9" fill="#ff0000"/><circle cx="21" cy="10" r="1.9" fill="#ff0000"/><circle cx="29" cy="6" r="1.9" fill="#ff0000"/><circle cx="14" cy="27" r="1.9" fill="#ff0000"/><circle cx="16" cy="22" r="1.9" fill="#ff0000"/><circle cx="20" cy="18" r="1.9" fill="#ff0000"/><circle cx="24" cy="16" r="1.9" fill="#ff0000"/><circle cx="29" cy="15" r="1.9" fill="#ff0000"/></svg><div style="position:absolute;left:1px;top:234px;width:35px;height:35px;box-sizing:border-box;border:1px solid #8c8c8c;background:linear-gradient(#f6f6f6,#e6e6e6 25%,#ececec 60%,#f4f4f4)"></div><svg width="35" height="35" viewBox="0 0 35 35" style="position:absolute;left:1px;top:234px;overflow:visible"><path d="M9 6 L18 17 M18 17 L28 14 M18 17 Q15 22 15 27" stroke="#222" stroke-width="1.3" fill="none"/><path d="M14 14 Q18 10 23 14" stroke="#555" stroke-width="0.7" fill="none"/><circle cx="18" cy="17" r="1.9" fill="#ff0000"/></svg><div style="position:absolute;left:36px;top:234px;width:35px;height:35px;box-sizing:border-box;border:1px solid #8c8c8c;background:linear-gradient(#f6f6f6,#e6e6e6 25%,#ececec 60%,#f4f4f4)"></div><svg width="35" height="35" viewBox="0 0 35 35" style="position:absolute;left:36px;top:234px;overflow:visible"><circle cx="23" cy="14" r="8" stroke="#222" stroke-width="1.3" fill="none"/><path d="M7 25 L15 10" stroke="#222" stroke-width="1.3" fill="none"/><circle cx="15" cy="10" r="1.9" fill="#ff0000"/></svg><div style="position:absolute;left:1px;top:269px;width:35px;height:35px;box-sizing:border-box;border:1px solid #8c8c8c;background:linear-gradient(#f6f6f6,#e6e6e6 25%,#ececec 60%,#f4f4f4)"></div><svg width="35" height="35" viewBox="0 0 35 35" style="position:absolute;left:1px;top:269px;overflow:visible"><path d="M6 17 L28 7" stroke="#222" stroke-width="1.3" fill="none"/><path d="M15 25 Q15 16 28 14" stroke="#222" stroke-width="1.3" fill="none"/><circle cx="17.5" cy="11.5" r="1.9" fill="#ff0000"/><circle cx="28" cy="25.5" r="1.9" fill="#ff0000"/></svg><div style="position:absolute;left:36px;top:269px;width:35px;height:35px;box-sizing:border-box;border:1px solid #8c8c8c;background:linear-gradient(#f6f6f6,#e6e6e6 25%,#ececec 60%,#f4f4f4)"></div><svg width="35" height="35" viewBox="0 0 35 35" style="position:absolute;left:36px;top:269px;overflow:visible"><circle cx="17.5" cy="17.5" r="10" stroke="#222" stroke-width="1.3" fill="none"/><circle cx="17.5" cy="7.5" r="1.9" fill="#ff0000"/><circle cx="17.5" cy="27.5" r="1.9" fill="#ff0000"/><circle cx="7.5" cy="17.5" r="1.9" fill="#ff0000"/><circle cx="27.5" cy="17.5" r="1.9" fill="#ff0000"/><circle cx="17.5" cy="17.5" r="1.9" fill="#ff0000"/></svg><div style="position:absolute;left:1px;top:312px;width:35px;height:35px;box-sizing:border-box;border:1px solid #8c8c8c;background:linear-gradient(#f6f6f6,#e6e6e6 25%,#ececec 60%,#f4f4f4)"></div><svg width="35" height="35" viewBox="0 0 35 35" style="position:absolute;left:1px;top:312px;overflow:visible"><path d="M6 17 L28 7" stroke="#222" stroke-width="1.3" fill="none"/><path d="M15 27 Q15 18 28 15" stroke="#222" stroke-width="1.3" fill="none"/><circle cx="18" cy="12" r="1.9" fill="#ff0000"/><circle cx="19" cy="18" r="1.9" fill="#ff0000"/></svg><div style="position:absolute;left:36px;top:312px;width:35px;height:35px;box-sizing:border-box;border:1px solid #8c8c8c;background:linear-gradient(#f6f6f6,#e6e6e6 25%,#ececec 60%,#f4f4f4)"></div><svg width="35" height="35" viewBox="0 0 35 35" style="position:absolute;left:36px;top:312px;overflow:visible"><rect x="5" y="7" width="24" height="19" fill="none" stroke="#333" stroke-width="1.6"/><path d="M7 24 L27 9" stroke="#888" stroke-width="0.7" stroke-dasharray="2 1.5"/><circle cx="17" cy="17" r="1.9" fill="#ff0000"/></svg><div style="position:absolute;left:1px;top:355px;width:35px;height:35px;box-sizing:border-box;border:1px solid #8c8c8c;background:linear-gradient(#f6f6f6,#e6e6e6 25%,#ececec 60%,#f4f4f4)"></div><svg width="35" height="35" viewBox="0 0 35 35" style="position:absolute;left:1px;top:355px;overflow:visible"><path d="M8 16 L28 6 M15 12 Q20 9 28 9" stroke="#222" stroke-width="1.3" fill="none"/><path d="M17 27 Q17 20 28 15" stroke="#222" stroke-width="1.3" fill="none"/><path d="M6 13 L11 10 M9 9 L12 10 L10 13" stroke="#111" stroke-width="1.6" fill="none"/><path d="M19 25 L21 20 M19 22 L21 20 L22 23" stroke="#111" stroke-width="1.6" fill="none"/><circle cx="15" cy="13.5" r="1.9" fill="#ff0000"/><circle cx="19" cy="19" r="1.9" fill="#ff0000"/></svg><div style="position:absolute;left:36px;top:355px;width:35px;height:35px;box-sizing:border-box;border:1px solid #8c8c8c;background:linear-gradient(#f6f6f6,#e6e6e6 25%,#ececec 60%,#f4f4f4)"></div><svg width="35" height="35" viewBox="0 0 35 35" style="position:absolute;left:36px;top:355px;overflow:visible"><path d="M8 15 L28 5" stroke="#222" stroke-width="1.3" stroke-dasharray="4 2"/><path d="M6 12 L11 9 M9 8 L12 9 L10 12" stroke="#111" stroke-width="1.6" fill="none"/><circle cx="13.5" cy="13" r="1.9" fill="#ff0000"/><circle cx="28" cy="5" r="1.2" fill="#111"/><circle cx="6" cy="17" r="1.2" fill="#111"/><text x="4" y="29" font-family="Liberation Sans" font-size="10.5" fill="#111">1</text><text x="23" y="19" font-family="Liberation Sans" font-size="10.5" fill="#111">2</text></svg><div style="position:absolute;left:1px;top:398px;width:35px;height:35px;box-sizing:border-box;border:1px solid #8c8c8c;background:linear-gradient(#f6f6f6,#e6e6e6 25%,#ececec 60%,#f4f4f4)"></div><svg width="35" height="35" viewBox="0 0 35 35" style="position:absolute;left:1px;top:398px;overflow:visible"><path d="M6 13 L30 21 M24 5 L18 29" stroke="#222" stroke-width="1.3" fill="none"/><circle cx="21" cy="17.5" r="1.9" fill="#ff0000"/></svg><div style="position:absolute;left:36px;top:398px;width:35px;height:35px;box-sizing:border-box;border:1px solid #8c8c8c;background:linear-gradient(#f6f6f6,#e6e6e6 25%,#ececec 60%,#f4f4f4)"></div><svg width="35" height="35" viewBox="0 0 35 35" style="position:absolute;left:36px;top:398px;overflow:visible"><path d="M6 17 L18 21 M28 8 L24 21" stroke="#222" stroke-width="1.3" fill="none"/><circle cx="23" cy="23.5" r="1.9" fill="#ff0000"/></svg><div style="position:absolute;left:1px;top:441px;width:35px;height:35px;box-sizing:border-box;border:1px solid #a0a0a0;border-radius:5px;background:linear-gradient(#bcbcbc,#c6c6c6)"></div><div style="position:absolute;left:7.5px;top:453px;font-size:11px;line-height:11px;color:#222">Auto</div><div style="position:absolute;left:1px;top:484px;width:35px;height:35px;box-sizing:border-box;border:1px solid #8c8c8c;background:linear-gradient(#f6f6f6,#e6e6e6 25%,#ececec 60%,#f4f4f4)"></div><svg width="35" height="35" viewBox="0 0 35 35" style="position:absolute;left:1px;top:484px;overflow:visible"><path d="M15 6 V21 H30" stroke="#333" stroke-width="1.3" fill="none"/><text x="5" y="14" font-family="Liberation Sans" font-size="11" fill="#222">y</text><text x="23" y="31" font-family="Liberation Sans" font-size="11" fill="#222">x</text><circle cx="28" cy="7" r="1.7" fill="#ff0000"/></svg><div style="position:absolute;left:36px;top:484px;width:35px;height:35px;box-sizing:border-box;border:1px solid #8c8c8c;background:linear-gradient(#f6f6f6,#e6e6e6 25%,#ececec 60%,#f4f4f4)"></div><svg width="35" height="35" viewBox="0 0 35 35" style="position:absolute;left:36px;top:484px;overflow:visible"><path d="M6 25 L21 9 Q27 16 26 25 Z" stroke="#222" stroke-width="1.3" fill="none"/><text x="7" y="17" font-family="Liberation Sans" font-size="11" fill="#222">r</text><text x="18" y="23" font-family="Liberation Sans" font-size="10" fill="#222">a</text><circle cx="21" cy="9" r="1.8" fill="#ff0000"/></svg><div style="position:absolute;left:1px;top:527px;width:35px;height:35px;box-sizing:border-box;border:1px solid #8c8c8c;background:linear-gradient(#f6f6f6,#e6e6e6 25%,#ececec 60%,#f4f4f4)"></div><svg width="35" height="35" viewBox="0 0 35 35" style="position:absolute;left:1px;top:527px;overflow:visible"><path d="M9.5 8 V24 M9.5 8 H26" stroke="#bbb" stroke-width="1"/><circle cx="9.5" cy="8" r="2.2" fill="#ff0000"/><circle cx="26" cy="8" r="1.2" fill="#111"/><circle cx="9.5" cy="24" r="1.2" fill="#111"/><text x="13" y="29" font-family="Liberation Sans" font-size="11" fill="#222">1</text><text x="23" y="22" font-family="Liberation Sans" font-size="11" fill="#222">2</text></svg><div style="position:absolute;left:36px;top:527px;width:35px;height:35px;box-sizing:border-box;border:1px solid #8c8c8c;background:linear-gradient(#f6f6f6,#e6e6e6 25%,#ececec 60%,#f4f4f4)"></div><svg width="35" height="35" viewBox="0 0 35 35" style="position:absolute;left:36px;top:527px;overflow:visible"><path d="M25.5 8 V24 M9.5 24 H25.5" stroke="#bbb" stroke-width="1"/><circle cx="25.5" cy="24" r="2.2" fill="#ff0000"/><circle cx="9.5" cy="24" r="1.2" fill="#111"/><circle cx="25.5" cy="8" r="1.2" fill="#111"/><text x="6" y="21" font-family="Liberation Sans" font-size="11" fill="#222">1</text><text x="17" y="14" font-family="Liberation Sans" font-size="11" fill="#222">2</text></svg><div style="position:absolute;left:1px;top:570px;width:35px;height:35px;box-sizing:border-box;border:1px solid #8c8c8c;background:linear-gradient(#f6f6f6,#e6e6e6 25%,#ececec 60%,#f4f4f4)"></div><svg width="35" height="35" viewBox="0 0 35 35" style="position:absolute;left:1px;top:570px;overflow:visible"><path d="M7 7 H28 V25 H19 L17 27 H13 V22 H7 Z" fill="none" stroke="#f0a0a0" stroke-width="0.9"/><circle cx="14" cy="14" r="3.5" fill="none" stroke="#f0a0a0" stroke-width="0.9"/><path d="M17 22 L23 15 V22 Z" fill="none" stroke="#f0a0a0" stroke-width="0.9"/><circle cx="18" cy="17" r="1.5" fill="#ff0000"/></svg><div style="position:absolute;left:1px;top:613px;width:35px;height:35px;box-sizing:border-box;border:1px solid #9a9a9a;border-radius:5px;background:linear-gradient(#bdbdbd,#c6c6c6)"></div><svg width="35" height="35" viewBox="0 0 35 35" style="position:absolute;left:1px;top:613px;overflow:visible"><path d="M13 16.5 H20.5 M16.5 12.5 V20.5" stroke="#333" stroke-width="1.1"/></svg><div style="position:absolute;left:36px;top:613px;width:35px;height:35px;box-sizing:border-box;border:1px solid #8c8c8c;background:linear-gradient(#f6f6f6,#e6e6e6 25%,#ececec 60%,#f4f4f4)"></div><svg width="35" height="35" viewBox="0 0 35 35" style="position:absolute;left:36px;top:613px;overflow:visible"><path d="M5 16.5 H29 M16.5 4 V28" stroke="#000" stroke-width="1.1"/><circle cx="16.5" cy="16.5" r="3.4" fill="none" stroke="#ff0000" stroke-width="1.1"/><path d="M13.1 16.5 H19.9 M16.5 13.1 V19.9" stroke="#ff0000" stroke-width="0.9"/></svg><div style="position:absolute;left:1px;top:648px;width:35px;height:35px;box-sizing:border-box;border:1px solid #8c8c8c;background:linear-gradient(#f6f6f6,#e6e6e6 25%,#ececec 60%,#f4f4f4)"></div><svg width="35" height="35" viewBox="0 0 35 35" style="position:absolute;left:1px;top:648px;overflow:visible"><path d="M5 16.5 H28" stroke="#000" stroke-width="1.1"/><circle cx="16.5" cy="16.5" r="3.4" fill="none" stroke="#ff0000" stroke-width="1.1"/><path d="M13.1 16.5 H19.9 M16.5 13.1 V19.9" stroke="#ff0000" stroke-width="0.9"/></svg><div style="position:absolute;left:36px;top:648px;width:35px;height:35px;box-sizing:border-box;border:1px solid #8c8c8c;background:linear-gradient(#f6f6f6,#e6e6e6 25%,#ececec 60%,#f4f4f4)"></div><svg width="35" height="35" viewBox="0 0 35 35" style="position:absolute;left:36px;top:648px;overflow:visible"><path d="M16.5 4 V28" stroke="#000" stroke-width="1.1"/><circle cx="16.5" cy="16.5" r="3.4" fill="none" stroke="#ff0000" stroke-width="1.1"/><path d="M13.1 16.5 H19.9 M16.5 13.1 V19.9" stroke="#ff0000" stroke-width="0.9"/></svg><div style="position:absolute;left:1px;top:683px;width:35px;height:35px;box-sizing:border-box;border:1px solid #8c8c8c;background:linear-gradient(#f6f6f6,#e6e6e6 25%,#ececec 60%,#f4f4f4)"></div><svg width="35" height="35" viewBox="0 0 35 35" style="position:absolute;left:1px;top:683px;overflow:visible"><path d="M8.5 25 L25.5 15.5" stroke="#111" stroke-width="1.2"/><path d="M9.11 7.51 L9.25 3.51 M13.32 8.18 L14.43 4.33 M17.25 9.84 L19.25 6.38 M20.66 12.41 L23.44 9.53 M23.34 15.73 L26.73 13.61 M25.48 20.77 L29.36 19.80 M26.00 25.00 L30.00 25.00 " stroke="#666" stroke-width="0.9"/><circle cx="8.5" cy="25" r="3.4" fill="none" stroke="#ff0000" stroke-width="1.1"/><path d="M5.1 25 H11.9 M8.5 21.6 V28.4" stroke="#ff0000" stroke-width="0.9"/></svg><div style="position:absolute;left:1px;top:726px;width:35px;height:35px;box-sizing:border-box;border:1px solid #8c8c8c;background:linear-gradient(#f6f6f6,#e6e6e6 25%,#ececec 60%,#f4f4f4)"></div><svg width="35" height="35" viewBox="0 0 35 35" style="position:absolute;left:1px;top:726px;overflow:visible"><circle cx="14.5" cy="11" r="3" fill="none" stroke="#ff0000" stroke-width="1.1"/><path d="M11.5 11 H17.5 M14.5 8 V14" stroke="#ff0000" stroke-width="0.9"/><path d="M15.5 12.5 L15.5 23.5 L18 21 L20 25.5 L21.8 24.7 L19.8 20.3 L23.3 20.3 Z" fill="#fff" stroke="#444" stroke-width="0.9"/></svg><div style="position:absolute;left:36px;top:726px;width:35px;height:35px;box-sizing:border-box;border:1px solid #8c8c8c;background:linear-gradient(#f6f6f6,#e6e6e6 25%,#ececec 60%,#f4f4f4)"></div><svg width="35" height="35" viewBox="0 0 35 35" style="position:absolute;left:36px;top:726px;overflow:visible"><ellipse cx="10.3" cy="11" rx="2.3" ry="3.6" fill="none" stroke="#000" stroke-width="1.6"/><path d="M12.5 11 H26.0" stroke="#000" stroke-width="2"/><path d="M21.5 11 V14.5 M25.0 11 V14.5" stroke="#000" stroke-width="1.7"/><circle cx="17.5" cy="22.5" r="3" fill="none" stroke="#ff0000" stroke-width="1.1"/><path d="M14.5 22.5 H20.5 M17.5 19.5 V25.5" stroke="#ff0000" stroke-width="0.9"/></svg><div style="position:absolute;left:1px;top:769px;width:35px;height:29px;box-sizing:border-box;border:1px solid #8c8c8c;background:linear-gradient(#f6f6f6,#e6e6e6 25%,#ececec 60%,#f4f4f4)"></div><svg width="35" height="29" viewBox="0 0 35 29" style="position:absolute;left:1px;top:769px;overflow:visible"><ellipse cx="9.8" cy="17" rx="2.3" ry="3.6" fill="none" stroke="#000" stroke-width="1.6"/><path d="M12 17 H25.5" stroke="#000" stroke-width="2"/><path d="M21 17 V20.5 M24.5 17 V20.5" stroke="#000" stroke-width="1.7"/></svg><div style="position:absolute;left:72px;top:108px;width:1082px;height:24px;background:#d3d3d3"></div><div style="position:absolute;left:72px;top:132px;width:1066px;height:23px;background:#ebebeb"></div><div style="position:absolute;left:583px;top:114px;font-size:12px;line-height:1;color:#111;white-space:nowrap;">* bond_washer.dxf</div><svg width="10" height="10" viewBox="0 0 10 10" style="position:absolute;left:78px;top:115px;overflow:visible"><path d="M1 1 L9 9 M9 1 L1 9" stroke="#777" stroke-width="1.1"/></svg><svg width="16" height="16" viewBox="0 0 16 16" style="position:absolute;left:95px;top:111px;overflow:visible"><circle cx="7" cy="7.7" r="5.2" fill="#f6f6f6" stroke="#2a3c8a" stroke-width="2.1"/><path d="M4 6 H10 M7 4 V11" stroke="#b8b8c0" stroke-width="0.7"/><path d="M4.5 9.5 L9 10" stroke="#e08080" stroke-width="0.7"/><path d="M7.5 8 L11.5 12.5" stroke="#f0a010" stroke-width="2.2"/><path d="M11.3 12.3 L13 14" stroke="#e06060" stroke-width="1.8"/></svg><div style="position:absolute;left:72px;top:155px;width:23px;height:577px;background:#ebebeb"></div><div style="position:absolute;left:1138px;top:132px;width:16px;height:23px;background:#ebebeb"></div><div style="position:absolute;left:1138px;top:155px;width:16px;height:577px;background:#f8f8f8"></div><div style="position:absolute;left:72px;top:732px;width:23px;height:16px;background:#ebebeb"></div><div style="position:absolute;left:95px;top:732px;width:1059px;height:16px;background:#f8f8f8"></div><div style="position:absolute;left:1099px;top:732px;width:55px;height:16px;background:#e6e6e6"></div><svg width="1066" height="23" style="position:absolute;left:72px;top:132px"><defs><clipPath id="tclip"><rect x="23" y="0" width="1043" height="23"/></clipPath><clipPath id="lclip"><rect x="0" y="0" width="23" height="577"/></clipPath></defs><g clip-path="url(#tclip)"><rect x="24" y="16" width="1" height="7" fill="#555"/><text transform="translate(24.5,9) scale(0.88,1)" font-family="Liberation Sans" font-size="9.8" fill="#000" stroke="#000" stroke-width="0.15" text-anchor="middle">-2</text><rect x="34" y="20" width="1" height="3" fill="#555"/><rect x="44" y="16" width="1" height="7" fill="#555"/><text transform="translate(44.5,9) scale(0.88,1)" font-family="Liberation Sans" font-size="9.8" fill="#000" stroke="#000" stroke-width="0.15" text-anchor="middle">0</text><rect x="54" y="20" width="1" height="3" fill="#555"/><rect x="64" y="16" width="1" height="7" fill="#555"/><text transform="translate(64.5,9) scale(0.88,1)" font-family="Liberation Sans" font-size="9.8" fill="#000" stroke="#000" stroke-width="0.15" text-anchor="middle">2</text><rect x="74" y="20" width="1" height="3" fill="#555"/><rect x="84" y="16" width="1" height="7" fill="#555"/><text transform="translate(84.5,9) scale(0.88,1)" font-family="Liberation Sans" font-size="9.8" fill="#000" stroke="#000" stroke-width="0.15" text-anchor="middle">4</text><rect x="94" y="20" width="1" height="3" fill="#555"/><rect x="104" y="16" width="1" height="7" fill="#555"/><text transform="translate(104.5,9) scale(0.88,1)" font-family="Liberation Sans" font-size="9.8" fill="#000" stroke="#000" stroke-width="0.15" text-anchor="middle">6</text><rect x="114" y="20" width="1" height="3" fill="#555"/><rect x="124" y="16" width="1" height="7" fill="#555"/><text transform="translate(124.5,9) scale(0.88,1)" font-family="Liberation Sans" font-size="9.8" fill="#000" stroke="#000" stroke-width="0.15" text-anchor="middle">8</text><rect x="134" y="20" width="1" height="3" fill="#555"/><rect x="144" y="16" width="1" height="7" fill="#555"/><text transform="translate(144.5,9) scale(0.88,1)" font-family="Liberation Sans" font-size="9.8" fill="#000" stroke="#000" stroke-width="0.15" text-anchor="middle">10</text><rect x="154" y="20" width="1" height="3" fill="#555"/><rect x="164" y="16" width="1" height="7" fill="#555"/><text transform="translate(164.5,9) scale(0.88,1)" font-family="Liberation Sans" font-size="9.8" fill="#000" stroke="#000" stroke-width="0.15" text-anchor="middle">12</text><rect x="174" y="20" width="1" height="3" fill="#555"/><rect x="184" y="16" width="1" height="7" fill="#555"/><text transform="translate(184.5,9) scale(0.88,1)" font-family="Liberation Sans" font-size="9.8" fill="#000" stroke="#000" stroke-width="0.15" text-anchor="middle">14</text><rect x="194" y="20" width="1" height="3" fill="#555"/><rect x="204" y="16" width="1" height="7" fill="#555"/><text transform="translate(204.5,9) scale(0.88,1)" font-family="Liberation Sans" font-size="9.8" fill="#000" stroke="#000" stroke-width="0.15" text-anchor="middle">16</text><rect x="214" y="20" width="1" height="3" fill="#555"/><rect x="224" y="16" width="1" height="7" fill="#555"/><text transform="translate(224.5,9) scale(0.88,1)" font-family="Liberation Sans" font-size="9.8" fill="#000" stroke="#000" stroke-width="0.15" text-anchor="middle">18</text><rect x="234" y="20" width="1" height="3" fill="#555"/><rect x="244" y="16" width="1" height="7" fill="#555"/><text transform="translate(244.5,9) scale(0.88,1)" font-family="Liberation Sans" font-size="9.8" fill="#000" stroke="#000" stroke-width="0.15" text-anchor="middle">20</text><rect x="254" y="20" width="1" height="3" fill="#555"/><rect x="264" y="16" width="1" height="7" fill="#555"/><text transform="translate(264.5,9) scale(0.88,1)" font-family="Liberation Sans" font-size="9.8" fill="#000" stroke="#000" stroke-width="0.15" text-anchor="middle">22</text><rect x="274" y="20" width="1" height="3" fill="#555"/><rect x="284" y="16" width="1" height="7" fill="#555"/><text transform="translate(284.5,9) scale(0.88,1)" font-family="Liberation Sans" font-size="9.8" fill="#000" stroke="#000" stroke-width="0.15" text-anchor="middle">24</text><rect x="294" y="20" width="1" height="3" fill="#555"/><rect x="304" y="16" width="1" height="7" fill="#555"/><text transform="translate(304.5,9) scale(0.88,1)" font-family="Liberation Sans" font-size="9.8" fill="#000" stroke="#000" stroke-width="0.15" text-anchor="middle">26</text><rect x="314" y="20" width="1" height="3" fill="#555"/><rect x="324" y="16" width="1" height="7" fill="#555"/><text transform="translate(324.5,9) scale(0.88,1)" font-family="Liberation Sans" font-size="9.8" fill="#000" stroke="#000" stroke-width="0.15" text-anchor="middle">28</text><rect x="334" y="20" width="1" height="3" fill="#555"/><rect x="344" y="16" width="1" height="7" fill="#555"/><text transform="translate(344.5,9) scale(0.88,1)" font-family="Liberation Sans" font-size="9.8" fill="#000" stroke="#000" stroke-width="0.15" text-anchor="middle">30</text><rect x="354" y="20" width="1" height="3" fill="#555"/><rect x="364" y="16" width="1" height="7" fill="#555"/><text transform="translate(364.5,9) scale(0.88,1)" font-family="Liberation Sans" font-size="9.8" fill="#000" stroke="#000" stroke-width="0.15" text-anchor="middle">32</text><rect x="374" y="20" width="1" height="3" fill="#555"/><rect x="384" y="16" width="1" height="7" fill="#555"/><text transform="translate(384.5,9) scale(0.88,1)" font-family="Liberation Sans" font-size="9.8" fill="#000" stroke="#000" stroke-width="0.15" text-anchor="middle">34</text><rect x="394" y="20" width="1" height="3" fill="#555"/><rect x="404" y="16" width="1" height="7" fill="#555"/><text transform="translate(404.5,9) scale(0.88,1)" font-family="Liberation Sans" font-size="9.8" fill="#000" stroke="#000" stroke-width="0.15" text-anchor="middle">36</text><rect x="414" y="20" width="1" height="3" fill="#555"/><rect x="424" y="16" width="1" height="7" fill="#555"/><text transform="translate(424.5,9) scale(0.88,1)" font-family="Liberation Sans" font-size="9.8" fill="#000" stroke="#000" stroke-width="0.15" text-anchor="middle">38</text><rect x="434" y="20" width="1" height="3" fill="#555"/><rect x="444" y="16" width="1" height="7" fill="#555"/><text transform="translate(444.5,9) scale(0.88,1)" font-family="Liberation Sans" font-size="9.8" fill="#000" stroke="#000" stroke-width="0.15" text-anchor="middle">40</text><rect x="454" y="20" width="1" height="3" fill="#555"/><rect x="464" y="16" width="1" height="7" fill="#555"/><text transform="translate(464.5,9) scale(0.88,1)" font-family="Liberation Sans" font-size="9.8" fill="#000" stroke="#000" stroke-width="0.15" text-anchor="middle">42</text><rect x="474" y="20" width="1" height="3" fill="#555"/><rect x="484" y="16" width="1" height="7" fill="#555"/><text transform="translate(484.5,9) scale(0.88,1)" font-family="Liberation Sans" font-size="9.8" fill="#000" stroke="#000" stroke-width="0.15" text-anchor="middle">44</text><rect x="494" y="20" width="1" height="3" fill="#555"/><rect x="504" y="16" width="1" height="7" fill="#555"/><text transform="translate(504.5,9) scale(0.88,1)" font-family="Liberation Sans" font-size="9.8" fill="#000" stroke="#000" stroke-width="0.15" text-anchor="middle">46</text><rect x="514" y="20" width="1" height="3" fill="#555"/><rect x="524" y="16" width="1" height="7" fill="#555"/><text transform="translate(524.5,9) scale(0.88,1)" font-family="Liberation Sans" font-size="9.8" fill="#000" stroke="#000" stroke-width="0.15" text-anchor="middle">48</text><rect x="534" y="20" width="1" height="3" fill="#555"/><rect x="544" y="16" width="1" height="7" fill="#555"/><text transform="translate(544.5,9) scale(0.88,1)" font-family="Liberation Sans" font-size="9.8" fill="#000" stroke="#000" stroke-width="0.15" text-anchor="middle">50</text><rect x="554" y="20" width="1" height="3" fill="#555"/><rect x="564" y="16" width="1" height="7" fill="#555"/><text transform="translate(564.5,9) scale(0.88,1)" font-family="Liberation Sans" font-size="9.8" fill="#000" stroke="#000" stroke-width="0.15" text-anchor="middle">52</text><rect x="574" y="20" width="1" height="3" fill="#555"/><rect x="584" y="16" width="1" height="7" fill="#555"/><text transform="translate(584.5,9) scale(0.88,1)" font-family="Liberation Sans" font-size="9.8" fill="#000" stroke="#000" stroke-width="0.15" text-anchor="middle">54</text><rect x="594" y="20" width="1" height="3" fill="#555"/><rect x="604" y="16" width="1" height="7" fill="#555"/><text transform="translate(604.5,9) scale(0.88,1)" font-family="Liberation Sans" font-size="9.8" fill="#000" stroke="#000" stroke-width="0.15" text-anchor="middle">56</text><rect x="614" y="20" width="1" height="3" fill="#555"/><rect x="624" y="16" width="1" height="7" fill="#555"/><text transform="translate(624.5,9) scale(0.88,1)" font-family="Liberation Sans" font-size="9.8" fill="#000" stroke="#000" stroke-width="0.15" text-anchor="middle">58</text><rect x="634" y="20" width="1" height="3" fill="#555"/><rect x="644" y="16" width="1" height="7" fill="#555"/><text transform="translate(644.5,9) scale(0.88,1)" font-family="Liberation Sans" font-size="9.8" fill="#000" stroke="#000" stroke-width="0.15" text-anchor="middle">60</text><rect x="654" y="20" width="1" height="3" fill="#555"/><rect x="664" y="16" width="1" height="7" fill="#555"/><text transform="translate(664.5,9) scale(0.88,1)" font-family="Liberation Sans" font-size="9.8" fill="#000" stroke="#000" stroke-width="0.15" text-anchor="middle">62</text><rect x="674" y="20" width="1" height="3" fill="#555"/><rect x="684" y="16" width="1" height="7" fill="#555"/><text transform="translate(684.5,9) scale(0.88,1)" font-family="Liberation Sans" font-size="9.8" fill="#000" stroke="#000" stroke-width="0.15" text-anchor="middle">64</text><rect x="694" y="20" width="1" height="3" fill="#555"/><rect x="704" y="16" width="1" height="7" fill="#555"/><text transform="translate(704.5,9) scale(0.88,1)" font-family="Liberation Sans" font-size="9.8" fill="#000" stroke="#000" stroke-width="0.15" text-anchor="middle">66</text><rect x="714" y="20" width="1" height="3" fill="#555"/><rect x="724" y="16" width="1" height="7" fill="#555"/><text transform="translate(724.5,9) scale(0.88,1)" font-family="Liberation Sans" font-size="9.8" fill="#000" stroke="#000" stroke-width="0.15" text-anchor="middle">68</text><rect x="734" y="20" width="1" height="3" fill="#555"/><rect x="744" y="16" width="1" height="7" fill="#555"/><text transform="translate(744.5,9) scale(0.88,1)" font-family="Liberation Sans" font-size="9.8" fill="#000" stroke="#000" stroke-width="0.15" text-anchor="middle">70</text><rect x="754" y="20" width="1" height="3" fill="#555"/><rect x="764" y="16" width="1" height="7" fill="#555"/><text transform="translate(764.5,9) scale(0.88,1)" font-family="Liberation Sans" font-size="9.8" fill="#000" stroke="#000" stroke-width="0.15" text-anchor="middle">72</text><rect x="774" y="20" width="1" height="3" fill="#555"/><rect x="784" y="16" width="1" height="7" fill="#555"/><text transform="translate(784.5,9) scale(0.88,1)" font-family="Liberation Sans" font-size="9.8" fill="#000" stroke="#000" stroke-width="0.15" text-anchor="middle">74</text><rect x="794" y="20" width="1" height="3" fill="#555"/><rect x="804" y="16" width="1" height="7" fill="#555"/><text transform="translate(804.5,9) scale(0.88,1)" font-family="Liberation Sans" font-size="9.8" fill="#000" stroke="#000" stroke-width="0.15" text-anchor="middle">76</text><rect x="814" y="20" width="1" height="3" fill="#555"/><rect x="824" y="16" width="1" height="7" fill="#555"/><text transform="translate(824.5,9) scale(0.88,1)" font-family="Liberation Sans" font-size="9.8" fill="#000" stroke="#000" stroke-width="0.15" text-anchor="middle">78</text><rect x="834" y="20" width="1" height="3" fill="#555"/><rect x="844" y="16" width="1" height="7" fill="#555"/><text transform="translate(844.5,9) scale(0.88,1)" font-family="Liberation Sans" font-size="9.8" fill="#000" stroke="#000" stroke-width="0.15" text-anchor="middle">80</text><rect x="854" y="20" width="1" height="3" fill="#555"/><rect x="864" y="16" width="1" height="7" fill="#555"/><text transform="translate(864.5,9) scale(0.88,1)" font-family="Liberation Sans" font-size="9.8" fill="#000" stroke="#000" stroke-width="0.15" text-anchor="middle">82</text><rect x="874" y="20" width="1" height="3" fill="#555"/><rect x="884" y="16" width="1" height="7" fill="#555"/><text transform="translate(884.5,9) scale(0.88,1)" font-family="Liberation Sans" font-size="9.8" fill="#000" stroke="#000" stroke-width="0.15" text-anchor="middle">84</text><rect x="894" y="20" width="1" height="3" fill="#555"/><rect x="904" y="16" width="1" height="7" fill="#555"/><text transform="translate(904.5,9) scale(0.88,1)" font-family="Liberation Sans" font-size="9.8" fill="#000" stroke="#000" stroke-width="0.15" text-anchor="middle">86</text><rect x="914" y="20" width="1" height="3" fill="#555"/><rect x="924" y="16" width="1" height="7" fill="#555"/><text transform="translate(924.5,9) scale(0.88,1)" font-family="Liberation Sans" font-size="9.8" fill="#000" stroke="#000" stroke-width="0.15" text-anchor="middle">88</text><rect x="934" y="20" width="1" height="3" fill="#555"/><rect x="944" y="16" width="1" height="7" fill="#555"/><text transform="translate(944.5,9) scale(0.88,1)" font-family="Liberation Sans" font-size="9.8" fill="#000" stroke="#000" stroke-width="0.15" text-anchor="middle">90</text><rect x="954" y="20" width="1" height="3" fill="#555"/><rect x="964" y="16" width="1" height="7" fill="#555"/><text transform="translate(964.5,9) scale(0.88,1)" font-family="Liberation Sans" font-size="9.8" fill="#000" stroke="#000" stroke-width="0.15" text-anchor="middle">92</text><rect x="974" y="20" width="1" height="3" fill="#555"/><rect x="984" y="16" width="1" height="7" fill="#555"/><text transform="translate(984.5,9) scale(0.88,1)" font-family="Liberation Sans" font-size="9.8" fill="#000" stroke="#000" stroke-width="0.15" text-anchor="middle">94</text><rect x="994" y="20" width="1" height="3" fill="#555"/><rect x="1004" y="16" width="1" height="7" fill="#555"/><text transform="translate(1004.5,9) scale(0.88,1)" font-family="Liberation Sans" font-size="9.8" fill="#000" stroke="#000" stroke-width="0.15" text-anchor="middle">96</text><rect x="1014" y="20" width="1" height="3" fill="#555"/><rect x="1024" y="16" width="1" height="7" fill="#555"/><text transform="translate(1024.5,9) scale(0.88,1)" font-family="Liberation Sans" font-size="9.8" fill="#000" stroke="#000" stroke-width="0.15" text-anchor="middle">98</text><rect x="1034" y="20" width="1" height="3" fill="#555"/><rect x="1044" y="16" width="1" height="7" fill="#555"/><text transform="translate(1044.5,9) scale(0.88,1)" font-family="Liberation Sans" font-size="9.8" fill="#000" stroke="#000" stroke-width="0.15" text-anchor="middle">100</text><rect x="1054" y="20" width="1" height="3" fill="#555"/><rect x="1064" y="16" width="1" height="7" fill="#555"/><text transform="translate(1064.5,9) scale(0.88,1)" font-family="Liberation Sans" font-size="9.8" fill="#000" stroke="#000" stroke-width="0.15" text-anchor="middle">102</text><rect x="1074" y="20" width="1" height="3" fill="#555"/></g><path d="M138.5 13 L150.5 13 L144.5 18.5 Z" fill="#000"/></svg><svg width="23" height="577" style="position:absolute;left:72px;top:155px"><rect x="20" y="588" width="3" height="1" fill="#555"/><rect x="16" y="578" width="7" height="1" fill="#555"/><text transform="translate(9,578.5) rotate(-90) scale(0.88,1)" font-family="Liberation Sans" font-size="9.8" fill="#000" stroke="#000" stroke-width="0.15" text-anchor="middle">-20</text><rect x="20" y="568" width="3" height="1" fill="#555"/><rect x="16" y="558" width="7" height="1" fill="#555"/><text transform="translate(9,558.5) rotate(-90) scale(0.88,1)" font-family="Liberation Sans" font-size="9.8" fill="#000" stroke="#000" stroke-width="0.15" text-anchor="middle">-18</text><rect x="20" y="548" width="3" height="1" fill="#555"/><rect x="16" y="538" width="7" height="1" fill="#555"/><text transform="translate(9,538.5) rotate(-90) scale(0.88,1)" font-family="Liberation Sans" font-size="9.8" fill="#000" stroke="#000" stroke-width="0.15" text-anchor="middle">-16</text><rect x="20" y="528" width="3" height="1" fill="#555"/><rect x="16" y="518" width="7" height="1" fill="#555"/><text transform="translate(9,518.5) rotate(-90) scale(0.88,1)" font-family="Liberation Sans" font-size="9.8" fill="#000" stroke="#000" stroke-width="0.15" text-anchor="middle">-14</text><rect x="20" y="508" width="3" height="1" fill="#555"/><rect x="16" y="498" width="7" height="1" fill="#555"/><text transform="translate(9,498.5) rotate(-90) scale(0.88,1)" font-family="Liberation Sans" font-size="9.8" fill="#000" stroke="#000" stroke-width="0.15" text-anchor="middle">-12</text><rect x="20" y="488" width="3" height="1" fill="#555"/><rect x="16" y="478" width="7" height="1" fill="#555"/><text transform="translate(9,478.5) rotate(-90) scale(0.88,1)" font-family="Liberation Sans" font-size="9.8" fill="#000" stroke="#000" stroke-width="0.15" text-anchor="middle">-10</text><rect x="20" y="468" width="3" height="1" fill="#555"/><rect x="16" y="458" width="7" height="1" fill="#555"/><text transform="translate(9,458.5) rotate(-90) scale(0.88,1)" font-family="Liberation Sans" font-size="9.8" fill="#000" stroke="#000" stroke-width="0.15" text-anchor="middle">-8</text><rect x="20" y="448" width="3" height="1" fill="#555"/><rect x="16" y="438" width="7" height="1" fill="#555"/><text transform="translate(9,438.5) rotate(-90) scale(0.88,1)" font-family="Liberation Sans" font-size="9.8" fill="#000" stroke="#000" stroke-width="0.15" text-anchor="middle">-6</text><rect x="20" y="428" width="3" height="1" fill="#555"/><rect x="16" y="418" width="7" height="1" fill="#555"/><text transform="translate(9,418.5) rotate(-90) scale(0.88,1)" font-family="Liberation Sans" font-size="9.8" fill="#000" stroke="#000" stroke-width="0.15" text-anchor="middle">-4</text><rect x="20" y="408" width="3" height="1" fill="#555"/><rect x="16" y="398" width="7" height="1" fill="#555"/><text transform="translate(9,398.5) rotate(-90) scale(0.88,1)" font-family="Liberation Sans" font-size="9.8" fill="#000" stroke="#000" stroke-width="0.15" text-anchor="middle">-2</text><rect x="20" y="388" width="3" height="1" fill="#555"/><rect x="16" y="378" width="7" height="1" fill="#555"/><text transform="translate(9,378.5) rotate(-90) scale(0.88,1)" font-family="Liberation Sans" font-size="9.8" fill="#000" stroke="#000" stroke-width="0.15" text-anchor="middle">0</text><rect x="20" y="368" width="3" height="1" fill="#555"/><rect x="16" y="358" width="7" height="1" fill="#555"/><text transform="translate(9,358.5) rotate(-90) scale(0.88,1)" font-family="Liberation Sans" font-size="9.8" fill="#000" stroke="#000" stroke-width="0.15" text-anchor="middle">2</text><rect x="20" y="348" width="3" height="1" fill="#555"/><rect x="16" y="338" width="7" height="1" fill="#555"/><text transform="translate(9,338.5) rotate(-90) scale(0.88,1)" font-family="Liberation Sans" font-size="9.8" fill="#000" stroke="#000" stroke-width="0.15" text-anchor="middle">4</text><rect x="20" y="328" width="3" height="1" fill="#555"/><rect x="16" y="318" width="7" height="1" fill="#555"/><text transform="translate(9,318.5) rotate(-90) scale(0.88,1)" font-family="Liberation Sans" font-size="9.8" fill="#000" stroke="#000" stroke-width="0.15" text-anchor="middle">6</text><rect x="20" y="308" width="3" height="1" fill="#555"/><rect x="16" y="298" width="7" height="1" fill="#555"/><text transform="translate(9,298.5) rotate(-90) scale(0.88,1)" font-family="Liberation Sans" font-size="9.8" fill="#000" stroke="#000" stroke-width="0.15" text-anchor="middle">8</text><rect x="20" y="288" width="3" height="1" fill="#555"/><rect x="16" y="278" width="7" height="1" fill="#555"/><text transform="translate(9,278.5) rotate(-90) scale(0.88,1)" font-family="Liberation Sans" font-size="9.8" fill="#000" stroke="#000" stroke-width="0.15" text-anchor="middle">10</text><rect x="20" y="268" width="3" height="1" fill="#555"/><rect x="16" y="258" width="7" height="1" fill="#555"/><text transform="translate(9,258.5) rotate(-90) scale(0.88,1)" font-family="Liberation Sans" font-size="9.8" fill="#000" stroke="#000" stroke-width="0.15" text-anchor="middle">12</text><rect x="20" y="248" width="3" height="1" fill="#555"/><rect x="16" y="238" width="7" height="1" fill="#555"/><text transform="translate(9,238.5) rotate(-90) scale(0.88,1)" font-family="Liberation Sans" font-size="9.8" fill="#000" stroke="#000" stroke-width="0.15" text-anchor="middle">14</text><rect x="20" y="228" width="3" height="1" fill="#555"/><rect x="16" y="218" width="7" height="1" fill="#555"/><text transform="translate(9,218.5) rotate(-90) scale(0.88,1)" font-family="Liberation Sans" font-size="9.8" fill="#000" stroke="#000" stroke-width="0.15" text-anchor="middle">16</text><rect x="20" y="208" width="3" height="1" fill="#555"/><rect x="16" y="198" width="7" height="1" fill="#555"/><text transform="translate(9,198.5) rotate(-90) scale(0.88,1)" font-family="Liberation Sans" font-size="9.8" fill="#000" stroke="#000" stroke-width="0.15" text-anchor="middle">18</text><rect x="20" y="188" width="3" height="1" fill="#555"/><rect x="16" y="178" width="7" height="1" fill="#555"/><text transform="translate(9,178.5) rotate(-90) scale(0.88,1)" font-family="Liberation Sans" font-size="9.8" fill="#000" stroke="#000" stroke-width="0.15" text-anchor="middle">20</text><rect x="20" y="168" width="3" height="1" fill="#555"/><rect x="16" y="158" width="7" height="1" fill="#555"/><text transform="translate(9,158.5) rotate(-90) scale(0.88,1)" font-family="Liberation Sans" font-size="9.8" fill="#000" stroke="#000" stroke-width="0.15" text-anchor="middle">22</text><rect x="20" y="148" width="3" height="1" fill="#555"/><rect x="16" y="138" width="7" height="1" fill="#555"/><text transform="translate(9,138.5) rotate(-90) scale(0.88,1)" font-family="Liberation Sans" font-size="9.8" fill="#000" stroke="#000" stroke-width="0.15" text-anchor="middle">24</text><rect x="20" y="128" width="3" height="1" fill="#555"/><rect x="16" y="118" width="7" height="1" fill="#555"/><text transform="translate(9,118.5) rotate(-90) scale(0.88,1)" font-family="Liberation Sans" font-size="9.8" fill="#000" stroke="#000" stroke-width="0.15" text-anchor="middle">26</text><rect x="20" y="108" width="3" height="1" fill="#555"/><rect x="16" y="98" width="7" height="1" fill="#555"/><text transform="translate(9,98.5) rotate(-90) scale(0.88,1)" font-family="Liberation Sans" font-size="9.8" fill="#000" stroke="#000" stroke-width="0.15" text-anchor="middle">28</text><rect x="20" y="88" width="3" height="1" fill="#555"/><rect x="16" y="78" width="7" height="1" fill="#555"/><text transform="translate(9,78.5) rotate(-90) scale(0.88,1)" font-family="Liberation Sans" font-size="9.8" fill="#000" stroke="#000" stroke-width="0.15" text-anchor="middle">30</text><rect x="20" y="68" width="3" height="1" fill="#555"/><rect x="16" y="58" width="7" height="1" fill="#555"/><text transform="translate(9,58.5) rotate(-90) scale(0.88,1)" font-family="Liberation Sans" font-size="9.8" fill="#000" stroke="#000" stroke-width="0.15" text-anchor="middle">32</text><rect x="20" y="48" width="3" height="1" fill="#555"/><rect x="16" y="38" width="7" height="1" fill="#555"/><text transform="translate(9,38.5) rotate(-90) scale(0.88,1)" font-family="Liberation Sans" font-size="9.8" fill="#000" stroke="#000" stroke-width="0.15" text-anchor="middle">34</text><rect x="20" y="28" width="3" height="1" fill="#555"/><rect x="16" y="18" width="7" height="1" fill="#555"/><text transform="translate(9,18.5) rotate(-90) scale(0.88,1)" font-family="Liberation Sans" font-size="9.8" fill="#000" stroke="#000" stroke-width="0.15" text-anchor="middle">36</text><rect x="20" y="8" width="3" height="1" fill="#555"/><rect x="16" y="-2" width="7" height="1" fill="#555"/><text transform="translate(9,-1.5) rotate(-90) scale(0.88,1)" font-family="Liberation Sans" font-size="9.8" fill="#000" stroke="#000" stroke-width="0.15" text-anchor="middle">38</text><path d="M13 282.5 L13 294.5 L19 288.5 Z" fill="#000"/></svg><div style="position:absolute;left:1118px;top:734px;font-size:13px;line-height:1;color:#111;white-space:nowrap;">1 &lt; 10</div><div style="position:absolute;left:272px;top:737px;width:650px;height:8px;background:#808080;border-radius:4px"></div><div style="position:absolute;left:1143px;top:282px;width:8px;height:322px;background:#808080;border-radius:4px"></div><div style="position:absolute;left:72px;top:748px;width:1082px;height:2px;background:linear-gradient(#d8d8d8,#b8b8b8)"></div><div style="position:absolute;left:72px;top:750px;width:1082px;height:20px;background:#fff"></div><div style="position:absolute;left:76px;top:752px;font-size:13px;line-height:1;color:#1a1acc;white-space:nowrap;"><i>Command:</i> paste</div><div style="position:absolute;left:1143px;top:750px;width:8px;height:18px;background:#808080;border-radius:4px"></div><div style="position:absolute;left:72px;top:770px;width:1082px;height:1px;background:#b4b4b4"></div><div style="position:absolute;left:72px;top:771px;width:1082px;height:27px;background:#ececec"></div><div style="position:absolute;left:73px;top:778px;font-size:13px;line-height:1;color:#1a1a1a;white-space:nowrap;">Position:</div><div style="position:absolute;left:128px;top:776px;width:999px;height:18px;background:#fff"></div><div style="position:absolute;left:1127px;top:772px;width:25px;height:25px;background:linear-gradient(#f4f4f4,#e4e4e4);border:1px solid #b8b8b8;box-sizing:border-box"></div><div style="position:absolute;left:1133px;top:780px;width:14px;height:9px;border:1px solid #111;border-top:3px solid #111;box-sizing:border-box"></div><div style="position:absolute;left:1152px;top:750px;width:2px;height:48px;background:#c8c8c8"></div><div style="position:absolute;left:1154px;top:108px;width:2px;height:690px;background:#b4b4b4"></div><div style="position:absolute;left:1156px;top:108px;width:298px;height:22px;background:linear-gradient(#ececec,#dcdcdc)"></div><svg width="14" height="14" viewBox="0 0 14 14" style="position:absolute;left:1157px;top:111px;overflow:visible"><circle cx="7" cy="7" r="7" fill="#6a6a6a"/><path d="M4.2 4.2 L9.8 9.8 M9.8 4.2 L4.2 9.8" stroke="#e8e8e8" stroke-width="1.6"/></svg><svg width="14" height="14" viewBox="0 0 14 14" style="position:absolute;left:1175px;top:111px;overflow:visible"><circle cx="7" cy="7" r="7" fill="#6a6a6a"/><rect x="3.5" y="6" width="5" height="4" fill="none" stroke="#e8e8e8" stroke-width="1.1"/><path d="M5.5 6 V4 H10.5 V8 H8.5" fill="none" stroke="#e8e8e8" stroke-width="1.1"/></svg><div style="position:absolute;left:1296px;top:113px;font-size:12px;line-height:12px;color:#222;white-space:nowrap;">Layer List</div><div style="position:absolute;left:1156px;top:130px;width:298px;height:26px;background:#a8a8a8"></div><div style="position:absolute;left:1157px;top:131px;width:58px;height:23px;background:linear-gradient(#f4f4f4,#e6e6e6 30%,#ececec 70%,#f6f6f6)"></div><div style="position:absolute;left:1216px;top:131px;width:58px;height:23px;background:linear-gradient(#f4f4f4,#e6e6e6 30%,#ececec 70%,#f6f6f6)"></div><div style="position:absolute;left:1276px;top:131px;width:58px;height:23px;background:linear-gradient(#f4f4f4,#e6e6e6 30%,#ececec 70%,#f6f6f6)"></div><div style="position:absolute;left:1336px;top:131px;width:58px;height:23px;background:linear-gradient(#f4f4f4,#e6e6e6 30%,#ececec 70%,#f6f6f6)"></div><div style="position:absolute;left:1396px;top:131px;width:58px;height:23px;background:linear-gradient(#f4f4f4,#e6e6e6 30%,#ececec 70%,#f6f6f6)"></div><svg width="18" height="14" viewBox="0 0 18 14" style="position:absolute;left:1176px;top:136px;overflow:visible"><path d="M1 7 Q9 -1 17 7 Q9 14 1 7 Z" fill="#000"/><ellipse cx="9" cy="7.3" rx="5" ry="4.3" fill="#fff"/><circle cx="9" cy="7.3" r="3" fill="#000"/><path d="M1 7 Q9 -1 17 7" stroke="#000" stroke-width="2" fill="none"/></svg><svg width="18" height="14" viewBox="0 0 18 14" style="position:absolute;left:1236px;top:136px;overflow:visible"><path d="M1 7 Q9 -1 17 7 Q9 14 1 7 Z" fill="#b0b0b0"/><ellipse cx="9" cy="7.3" rx="5" ry="4.3" fill="#fff"/><circle cx="9" cy="7.3" r="3" fill="#b0b0b0"/><path d="M1 7 Q9 -1 17 7" stroke="#b0b0b0" stroke-width="2" fill="none"/></svg><svg width="14" height="14" viewBox="0 0 14 14" style="position:absolute;left:1297px;top:136px;overflow:visible"><path d="M7 1 V13 M1 7 H13" stroke="#e00000" stroke-width="3"/></svg><svg width="14" height="6" viewBox="0 0 14 6" style="position:absolute;left:1357px;top:140px;overflow:visible"><path d="M1 3 H13" stroke="#e00000" stroke-width="3"/></svg><svg width="18" height="18" viewBox="0 0 19 20" style="position:absolute;left:1416px;top:134px;overflow:visible"><path d="M2 16 L14 3 L16.5 5.5 L4.5 18 Z" fill="#e8a830" stroke="#9a6a10" stroke-width="0.8"/><path d="M14 3 L15.5 1.5 L18 4 L16.5 5.5 Z" fill="#e03030"/><path d="M2 16 L4.5 18 L1 19 Z" fill="#333"/></svg><div style="position:absolute;left:1156px;top:156px;width:298px;height:642px;background:#fff"></div><div style="position:absolute;left:1161px;top:163px;width:16px;height:9px;background:#fff;border:1px solid #111;box-sizing:border-box"></div><div style="position:absolute;left:1183px;top:161px;font-size:13px;line-height:13px;color:#111;white-space:nowrap;">0</div><svg width="18" height="14" viewBox="0 0 18 14" style="position:absolute;left:1414px;top:161px;overflow:visible"><path d="M1 7 Q9 -1 17 7 Q9 14 1 7 Z" fill="#000"/><ellipse cx="9" cy="7.3" rx="5" ry="4.3" fill="#fff"/><circle cx="9" cy="7.3" r="3" fill="#000"/><path d="M1 7 Q9 -1 17 7" stroke="#000" stroke-width="2" fill="none"/></svg><svg width="12" height="16" viewBox="0 0 12 16" style="position:absolute;left:1439px;top:159px;overflow:visible"><path d="M2.5 8 V5.5 Q2.5 1.5 6 1.5 Q9.5 1.5 9.5 5.5 V8" fill="none" stroke="#c4c4c4" stroke-width="1.6"/><rect x="0.5" y="7.5" width="11" height="8" rx="1" fill="#c4c4c4"/></svg><div style="position:absolute;left:1161px;top:183px;width:16px;height:9px;background:#ff0000;border:1px solid #111;box-sizing:border-box"></div><div style="position:absolute;left:1183px;top:181px;font-size:13px;line-height:13px;color:#111;white-space:nowrap;">Center</div><svg width="18" height="14" viewBox="0 0 18 14" style="position:absolute;left:1414px;top:181px;overflow:visible"><path d="M1 7 Q9 -1 17 7 Q9 14 1 7 Z" fill="#000"/><ellipse cx="9" cy="7.3" rx="5" ry="4.3" fill="#fff"/><circle cx="9" cy="7.3" r="3" fill="#000"/><path d="M1 7 Q9 -1 17 7" stroke="#000" stroke-width="2" fill="none"/></svg><svg width="12" height="16" viewBox="0 0 12 16" style="position:absolute;left:1439px;top:179px;overflow:visible"><path d="M2.5 8 V5.5 Q2.5 1.5 6 1.5 Q9.5 1.5 9.5 5.5 V8" fill="none" stroke="#c4c4c4" stroke-width="1.6"/><rect x="0.5" y="7.5" width="11" height="8" rx="1" fill="#c4c4c4"/></svg><div style="position:absolute;left:1161px;top:203px;width:16px;height:9px;background:#000;border:1px solid #111;box-sizing:border-box"></div><div style="position:absolute;left:1183px;top:201px;font-size:13px;line-height:13px;color:#111;white-space:nowrap;">Hidden</div><svg width="18" height="14" viewBox="0 0 18 14" style="position:absolute;left:1414px;top:201px;overflow:visible"><path d="M1 7 Q9 -1 17 7 Q9 14 1 7 Z" fill="#000"/><ellipse cx="9" cy="7.3" rx="5" ry="4.3" fill="#fff"/><circle cx="9" cy="7.3" r="3" fill="#000"/><path d="M1 7 Q9 -1 17 7" stroke="#000" stroke-width="2" fill="none"/></svg><svg width="12" height="16" viewBox="0 0 12 16" style="position:absolute;left:1439px;top:199px;overflow:visible"><path d="M2.5 8 V5.5 Q2.5 1.5 6 1.5 Q9.5 1.5 9.5 5.5 V8" fill="none" stroke="#c4c4c4" stroke-width="1.6"/><rect x="0.5" y="7.5" width="11" height="8" rx="1" fill="#c4c4c4"/></svg><div style="position:absolute;left:1161px;top:223px;width:16px;height:9px;background:#fff;border:1px solid #111;box-sizing:border-box"></div><div style="position:absolute;left:1183px;top:221px;font-size:13px;line-height:13px;color:#111;white-space:nowrap;">Visible</div><svg width="18" height="14" viewBox="0 0 18 14" style="position:absolute;left:1414px;top:221px;overflow:visible"><path d="M1 7 Q9 -1 17 7 Q9 14 1 7 Z" fill="#000"/><ellipse cx="9" cy="7.3" rx="5" ry="4.3" fill="#fff"/><circle cx="9" cy="7.3" r="3" fill="#000"/><path d="M1 7 Q9 -1 17 7" stroke="#000" stroke-width="2" fill="none"/></svg><svg width="12" height="16" viewBox="0 0 12 16" style="position:absolute;left:1439px;top:219px;overflow:visible"><path d="M2.5 8 V5.5 Q2.5 1.5 6 1.5 Q9.5 1.5 9.5 5.5 V8" fill="none" stroke="#c4c4c4" stroke-width="1.6"/><rect x="0.5" y="7.5" width="11" height="8" rx="1" fill="#c4c4c4"/></svg><svg width="16" height="16" viewBox="0 0 19 20" style="position:absolute;left:1392px;top:219px;overflow:visible"><path d="M2 16 L14 3 L16.5 5.5 L4.5 18 Z" fill="#e8a830" stroke="#9a6a10" stroke-width="0.8"/><path d="M14 3 L15.5 1.5 L18 4 L16.5 5.5 Z" fill="#e03030"/><path d="M2 16 L4.5 18 L1 19 Z" fill="#333"/></svg><div style="position:absolute;left:1454px;top:108px;width:46px;height:690px;background:linear-gradient(90deg,#c8c8c8 0 1px,#ececec 1px,#dedede 55%,#c4c4c4)"></div><div style="position:absolute;left:1462px;top:116px;width:2px;height:2px;background:#a0a0a0"></div><div style="position:absolute;left:1468px;top:116px;width:2px;height:2px;background:#a0a0a0"></div><div style="position:absolute;left:1474px;top:116px;width:2px;height:2px;background:#a0a0a0"></div><div style="position:absolute;left:1480px;top:116px;width:2px;height:2px;background:#a0a0a0"></div><div style="position:absolute;left:1486px;top:116px;width:2px;height:2px;background:#a0a0a0"></div><div style="position:absolute;left:1457px;top:261px;width:42px;height:1px;background:repeating-linear-gradient(90deg,#777 0 1px,transparent 1px 3px)"></div><div style="position:absolute;left:1457px;top:409px;width:42px;height:1px;background:repeating-linear-gradient(90deg,#777 0 1px,transparent 1px 3px)"></div><div style="position:absolute;left:1456px;top:120px;width:42px;height:42px;background:#b4b4b4;border-radius:6px"></div><div style="position:absolute;left:1456px;top:417px;width:42px;height:42px;background:#b4b4b4;border-radius:6px"></div><svg width="28" height="28" viewBox="0 0 28 28" style="position:absolute;left:1463px;top:127px;overflow:visible"><rect x="0.5" y="0.5" width="27" height="27" fill="#fff" stroke="#222" stroke-width="1"/><rect x="0" y="0" width="28" height="5" fill="#000"/><rect x="1.5" y="1" width="3" height="3" fill="#fff"/><path d="M8 12 L15 10 L15 22 L8 24 Z" fill="#777"/><path d="M12 11 L21 8.5 L21 20.5 L12 23 Z" fill="#ddd" stroke="#555" stroke-width="0.7"/><path d="M14 21 L19 12 L19 19 Z" fill="none" stroke="#e03030" stroke-width="0.9"/></svg><svg width="28" height="28" viewBox="0 0 28 28" style="position:absolute;left:1463px;top:174px;overflow:visible"><rect x="0.5" y="0.5" width="27" height="27" fill="#fff" stroke="#222" stroke-width="1"/><rect x="0" y="0" width="28" height="5" fill="#000"/><rect x="1.5" y="1" width="3" height="3" fill="#fff"/><rect x="6" y="10" width="12" height="9" fill="#f4e4b0" stroke="#777" stroke-width="0.8"/><circle cx="18" cy="19" r="5" fill="#f4e4b0" stroke="#777" stroke-width="0.8"/></svg><svg width="28" height="28" viewBox="0 0 28 28" style="position:absolute;left:1463px;top:220px;overflow:visible"><rect x="0.5" y="0.5" width="27" height="27" fill="#fff" stroke="#222" stroke-width="1"/><rect x="0" y="0" width="28" height="5" fill="#000"/><rect x="1.5" y="1" width="3" height="3" fill="#fff"/><rect x="5" y="11" width="18" height="12" rx="2.5" fill="#f6f6f6" stroke="#c8d4e8" stroke-width="0.9"/></svg><svg width="28" height="28" viewBox="0 0 28 28" style="position:absolute;left:1463px;top:276px;overflow:visible"><rect x="0.5" y="0.5" width="27" height="27" fill="#fff" stroke="#222" stroke-width="1"/><rect x="0" y="0" width="28" height="5" fill="#000"/><rect x="1.5" y="1" width="3" height="3" fill="#fff"/><g fill="#111"><rect x="4" y="9" width="4" height="3"/><rect x="4" y="15" width="4" height="3"/><rect x="4" y="21" width="4" height="3"/></g><g fill="none" stroke="#333" stroke-width="0.8"><rect x="10" y="9" width="14" height="3"/><rect x="10" y="15" width="14" height="3"/><rect x="10" y="21" width="14" height="3"/></g></svg><svg width="28" height="28" viewBox="0 0 28 28" style="position:absolute;left:1463px;top:322px;overflow:visible"><rect x="0.5" y="0.5" width="27" height="27" fill="#fff" stroke="#222" stroke-width="1"/><rect x="0" y="0" width="28" height="5" fill="#000"/><rect x="1.5" y="1" width="3" height="3" fill="#fff"/><path d="M7 9 Q14 6 21 9 L15.5 16 V24 L12.5 22 V16 Z" fill="#888" stroke="#333" stroke-width="0.8"/></svg><svg width="28" height="28" viewBox="0 0 28 28" style="position:absolute;left:1463px;top:368px;overflow:visible"><rect x="0.5" y="0.5" width="27" height="27" fill="#fff" stroke="#222" stroke-width="1"/><rect x="0" y="0" width="28" height="5" fill="#000"/><rect x="1.5" y="1" width="3" height="3" fill="#fff"/><path d="M6 9 L13 14 V21 L6 25 Z" fill="#fff" stroke="#222" stroke-width="0.8"/><rect x="13" y="13" width="10" height="9" rx="2" fill="#777"/><path d="M4 17 H25" stroke="#f08080" stroke-width="0.6" stroke-dasharray="1.5 1"/></svg><svg width="28" height="28" viewBox="0 0 28 28" style="position:absolute;left:1463px;top:424px;overflow:visible"><rect x="0.5" y="0.5" width="27" height="27" fill="#fff" stroke="#222" stroke-width="1"/><rect x="0" y="0" width="28" height="5" fill="#000"/><rect x="1.5" y="1" width="3" height="3" fill="#fff"/><g stroke="#999" stroke-width="0.7"><path d="M3 9 H13 M3 12 H14 M3 15 H15 M3 18 H15"/></g><rect x="0.5" y="22" width="27" height="5.5" fill="#fff" stroke="#222" stroke-width="0.8"/><path d="M9 25 H25" stroke="#888" stroke-width="1"/></svg><svg width="28" height="28" viewBox="0 0 28 28" style="position:absolute;left:1463px;top:471px;overflow:visible"><rect x="0.5" y="0.5" width="27" height="27" fill="#fff" stroke="#222" stroke-width="1"/><rect x="0" y="0" width="28" height="5" fill="#000"/><rect x="1.5" y="1" width="3" height="3" fill="#fff"/><rect x="7" y="9" width="14" height="16" fill="#c88a30"/><rect x="9" y="11" width="10" height="12" fill="#f4f4f4"/><rect x="11" y="7.5" width="6" height="3" fill="#999"/></svg><div style="position:absolute;left:0;top:798px;width:1500px;height:46px;background:#dcdcdc"></div><div style="position:absolute;left:0;top:798px;width:1500px;height:1px;background:#c8c8c8"></div><div style="position:absolute;left:2px;top:807px;font-size:10px;line-height:10px;color:#111;white-space:nowrap;">10,9</div><div style="position:absolute;left:2px;top:827px;font-size:10px;line-height:10px;color:#111;white-space:nowrap;">@0,-1</div><div style="position:absolute;left:253px;top:802px;width:1px;height:38px;background:#8a8a8a"></div><div style="position:absolute;left:256px;top:807px;font-size:10px;line-height:10px;color:#111;white-space:nowrap;">13.4536&lt;42°</div><div style="position:absolute;left:256px;top:827px;font-size:10px;line-height:10px;color:#111;white-space:nowrap;">@1&lt;270°</div><div style="position:absolute;left:506px;top:819px;width:6px;height:6px;border-radius:3px;background:#c4c4c4"></div><div style="position:absolute;left:940px;top:819px;width:6px;height:6px;border-radius:3px;background:#c4c4c4"></div><div style="position:absolute;left:1269px;top:819px;width:6px;height:6px;border-radius:3px;background:#c4c4c4"></div><div style="position:absolute;left:662px;top:818px;font-size:10px;line-height:10px;color:#111;white-space:nowrap;">Position</div><svg width="20" height="32" viewBox="0 0 20 32" style="position:absolute;left:716px;top:805px;overflow:visible"><path d="M10 1.5 Q18.5 1.5 18.5 11 V22 Q18.5 30.5 10 30.5 Q1.5 30.5 1.5 22 V11 Q1.5 1.5 10 1.5 Z" fill="#fff" stroke="#333" stroke-width="1"/><path d="M1.5 13.5 H18.5 M10 2 V13.5" stroke="#333" stroke-width="1"/><rect x="8" y="4.5" width="4" height="6" rx="2" fill="#fff" stroke="#333" stroke-width="0.9"/></svg><div style="position:absolute;left:754px;top:818px;font-size:10px;line-height:10px;color:#111;white-space:nowrap;">Cancel</div><div style="position:absolute;left:949px;top:818px;font-size:10px;line-height:10px;color:#111;white-space:nowrap;">No entities selected.</div><svg width="1043" height="577" style="position:absolute;left:95px;top:155px;background:#000;will-change:transform"><defs><pattern id="dots" x="1" y="8" width="10" height="10" patternUnits="userSpaceOnUse"><rect x="0" y="0" width="1" height="1" fill="#484848"/></pattern></defs><rect x="21" y="0" width="1" height="577" fill="#1e1e1e"/><rect x="121" y="0" width="1" height="577" fill="#1e1e1e"/><rect x="221" y="0" width="1" height="577" fill="#1e1e1e"/><rect x="321" y="0" width="1" height="577" fill="#1e1e1e"/><rect x="421" y="0" width="1" height="577" fill="#1e1e1e"/><rect x="521" y="0" width="1" height="577" fill="#1e1e1e"/><rect x="621" y="0" width="1" height="577" fill="#1e1e1e"/><rect x="721" y="0" width="1" height="577" fill="#1e1e1e"/><rect x="821" y="0" width="1" height="577" fill="#1e1e1e"/><rect x="921" y="0" width="1" height="577" fill="#1e1e1e"/><rect x="1021" y="0" width="1" height="577" fill="#1e1e1e"/><rect x="0" y="478" width="1043" height="1" fill="#1e1e1e"/><rect x="0" y="378" width="1043" height="1" fill="#1e1e1e"/><rect x="0" y="278" width="1043" height="1" fill="#1e1e1e"/><rect x="0" y="178" width="1043" height="1" fill="#1e1e1e"/><rect x="0" y="78" width="1043" height="1" fill="#1e1e1e"/><rect x="0" y="0" width="1043" height="577" fill="url(#dots)"/><line x1="0" y1="288.5" x2="1043" y2="288.5" stroke="#a87a10" stroke-width="1" stroke-dasharray="5 2" opacity="0.9"/><line x1="121.5" y1="0" x2="121.5" y2="577" stroke="#a07510" stroke-width="1" stroke-dasharray="5 2" opacity="0.85"/><line x1="221.5" y1="178" x2="221.5" y2="398" stroke="#ff1a1a" stroke-width="1.5" stroke-dasharray="17 7.5 1.5 7" stroke-dashoffset="14"/><line x1="821.5" y1="178" x2="821.5" y2="398" stroke="#ff1a1a" stroke-width="1.5" stroke-dasharray="17 7.5 1.5 7" stroke-dashoffset="14"/><line x1="101" y1="288.5" x2="941" y2="288.5" stroke="#ff2a10" stroke-width="1.6" stroke-dasharray="17 7.5 1.5 7" stroke-dashoffset="1.7"/><rect x="101.5" y="248.5" width="840" height="80" fill="none" stroke="#7596dc" stroke-width="1.1" stroke-dasharray="11 4.5 2.5 4" stroke-dashoffset="6.5"/><rect x="121.5" y="198.5" width="800" height="180" fill="none" stroke="#fff" stroke-width="2.6"/><circle cx="221.5" cy="288.5" r="40" fill="none" stroke="#fff" stroke-width="2.6"/><circle cx="821.5" cy="288.5" r="40" fill="none" stroke="#fff" stroke-width="2.6"/><text x="0" y="0" transform="translate(331.3,364.4) rotate(-90) scale(0.905,1)" font-family="Liberation Sans" font-size="30" fill="#fff">104.245.02.4B</text><line x1="21.5" y1="358" x2="21.5" y2="398" stroke="#b01010" stroke-width="1"/><line x1="1" y1="378.5" x2="42" y2="378.5" stroke="#b01010" stroke-width="1"/><circle cx="121.5" cy="292" r="35" fill="none" stroke="#3c4a5a" stroke-width="8" opacity="0.9"/><circle cx="121.5" cy="292" r="38.2" fill="none" stroke="#8898aa" stroke-width="1.6" opacity="0.75"/><circle cx="121.5" cy="292" r="36.3" fill="none" stroke="#6a7a8c" stroke-width="1" opacity="0.5"/><circle cx="121.5" cy="292" r="33.8" fill="none" stroke="#6a7a8c" stroke-width="1" opacity="0.45"/><circle cx="121.5" cy="292" r="31.6" fill="none" stroke="#7f8fa2" stroke-width="1.4" opacity="0.65"/><rect x="120.30000000000001" y="197" width="2.2" height="183" fill="#d6c49a"/><circle cx="121.5" cy="278.5" r="5" fill="none" stroke="#d01010" stroke-width="1"/><circle cx="121.5" cy="288.5" r="5" fill="none" stroke="#c89010" stroke-width="1"/><rect x="106" y="291" width="31" height="3" fill="#c4c4c4"/><rect x="120.5" y="277" width="3" height="31" fill="#c4c4c4"/><text x="129" y="307" font-family="Liberation Sans" font-size="14" fill="#f0c420">Middle</text></svg></div>

</body></html>
